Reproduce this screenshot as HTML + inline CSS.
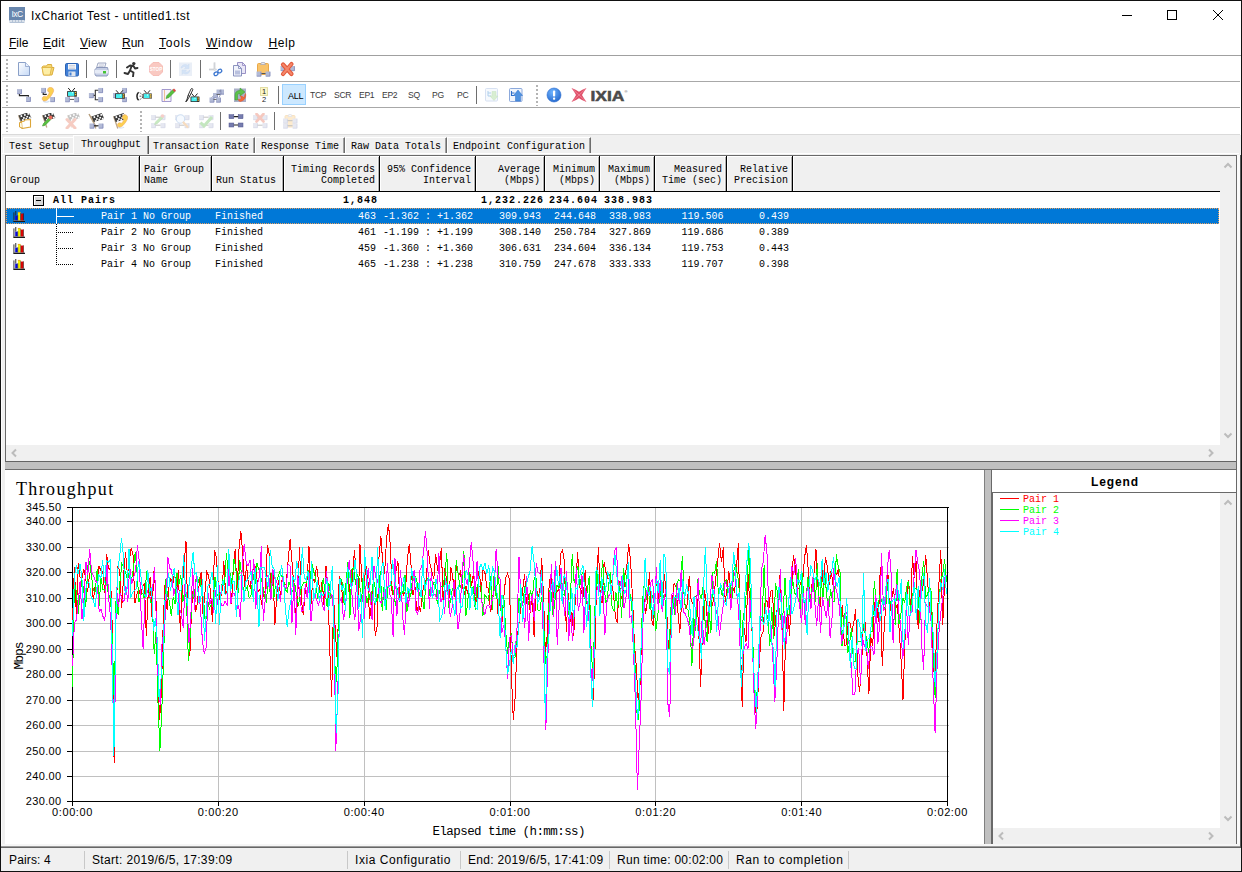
<!DOCTYPE html>
<html lang="en"><head><meta charset="utf-8"><title>IxChariot Test - untitled1.tst</title>
<style>
*{box-sizing:border-box;margin:0;padding:0}
html,body{width:1242px;height:872px;overflow:hidden;background:#f0f0f0}
body{position:relative;font-family:"Liberation Sans",sans-serif;font-size:12px;color:#000}
.a{position:absolute}
.m{font-family:"Liberation Mono",monospace;font-size:10px;line-height:12px;white-space:pre;letter-spacing:0;padding-top:1px}
.bd{font-weight:bold;letter-spacing:1px}
.ui{font-family:"Liberation Sans",sans-serif;font-size:12px;white-space:pre}
.r{text-align:right}
i.p{font-style:normal;display:inline-block;width:12px;text-align:left}
u{text-decoration:underline;text-underline-offset:1px}
.row{position:absolute;left:6px;width:1213px;height:16px}
.c{position:absolute;top:2px;height:12px}
.sel .c{color:#fff}
.hd{position:absolute;top:156px;height:35px;border-right:1px solid #000;border-left:1px solid #fff;border-top:1px solid #fff}
.hd span{position:absolute;left:0;right:3px;bottom:5px}
.sep{position:absolute;width:1px;height:18px;background:#6e6e6e}
.grip{position:absolute;width:2px;height:21px;background-image:linear-gradient(#b4b4b4 2px,transparent 2px);background-size:2px 4px}
.tb{position:absolute;font-family:"Liberation Sans",sans-serif;font-size:10px;color:#3a3a3a;top:89px;line-height:12px}
.st{position:absolute;top:852px;font-size:12px;line-height:16px;white-space:pre;letter-spacing:.36px}
.ss{position:absolute;top:851px;width:1px;height:18px;background:#c8c8c8}
</style></head>
<body>
<div class="a" style="left:0;top:0;width:1242px;height:55px;background:#fff"></div>
<svg class="a" style="left:9px;top:7px" width="16" height="16" viewBox="0 0 16 16"><rect width="16" height="16" fill="#6886ad"/><text x="8" y="9.5" font-family="Liberation Sans,sans-serif" font-size="8.500" fill="#fff" text-anchor="middle" letter-spacing="-0.5">IxC</text><path d="M0 14h16v2h-16zM2 13v2M5 13v2M8 13v2M11 13v2M14 13v2" stroke="#fff" stroke-width="1" fill="#6886ad"/></svg>
<div class="a ui" style="left:31px;top:8px;line-height:16px;letter-spacing:.46px">IxChariot Test - untitled1.tst</div>
<svg class="a" style="left:1110px;top:1px" width="130" height="30" viewBox="0 0 130 30" shape-rendering="crispEdges"><path d="M12 14.5h10" stroke="#000" fill="none"/><rect x="57.5" y="9.5" width="9" height="9" stroke="#000" fill="none"/><path d="M103 9l10 10M113 9l-10 10" stroke="#000" fill="none" shape-rendering="auto"/></svg>
<div class="a ui" style="left:9px;top:35px;line-height:16px;letter-spacing:0px"><u>F</u>ile</div>
<div class="a ui" style="left:43px;top:35px;line-height:16px;letter-spacing:0.3px"><u>E</u>dit</div>
<div class="a ui" style="left:80px;top:35px;line-height:16px;letter-spacing:0.25px"><u>V</u>iew</div>
<div class="a ui" style="left:122px;top:35px;line-height:16px;letter-spacing:0px"><u>R</u>un</div>
<div class="a ui" style="left:159px;top:35px;line-height:16px;letter-spacing:0.8px"><u>T</u>ools</div>
<div class="a ui" style="left:206px;top:35px;line-height:16px;letter-spacing:0.7px"><u>W</u>indow</div>
<div class="a ui" style="left:268.5px;top:35px;line-height:16px;letter-spacing:0.6px"><u>H</u>elp</div>
<div class="a" style="left:0;top:55px;width:1242px;height:1px;background:#a0a0a0"></div>
<div class="a" style="left:0;top:56px;width:1242px;height:79px;background:#fff"></div>
<div class="a" style="left:2px;top:81px;width:1238px;height:1px;background:#a8a8a8"></div>
<div class="a" style="left:2px;top:107px;width:1238px;height:1px;background:#a8a8a8"></div>
<div class="a" style="left:2px;top:134px;width:1238px;height:1px;background:#dadada"></div>
<div class="a" style="left:1px;top:135px;width:1px;height:712px;background:#fcfcfc"></div>
<div class="grip" style="left:6px;top:59px"></div>
<div class="grip" style="left:6px;top:85px"></div>
<div class="grip" style="left:6px;top:111px"></div>
<div class="grip" style="left:536px;top:85px"></div>
<div class="grip" style="left:140px;top:111px"></div>
<svg class="a" style="left:16px;top:61px" width="16" height="16" viewBox="0 0 16 16"><defs><linearGradient id="gn" x1="0" y1="0" x2="1" y2="1"><stop offset="0" stop-color="#fff"/><stop offset="1" stop-color="#c5d9f6"/></linearGradient></defs><path d="M2.5 1.5h7l4 4v9h-11z" fill="url(#gn)" stroke="#8aa0c8" stroke-width="1"/><path d="M9.5 1.5v4h4" fill="#e8f0ff" stroke="#8aa0c8" stroke-width=".8"/></svg>
<svg class="a" style="left:40px;top:61px" width="16" height="16" viewBox="0 0 16 16"><path d="M2 6l1.5 8h8.5l2-7.5h-2l-.5-3h-4l-1 1.5h-3z" fill="#f6d873" stroke="#dcae3c" stroke-width="1"/><path d="M2 6.5h9.5l-1.5 7.5h-6.500z" fill="#fdeea6" stroke="#dcae3c" stroke-width=".8"/></svg>
<svg class="a" style="left:64px;top:61px" width="16" height="16" viewBox="0 0 16 16"><rect x="1.500" y="2.500" width="13" height="12.500" rx="1.200" fill="#3f7fd6" stroke="#2d63b4"/><rect x="4" y="3" width="8" height="5.500" fill="#f4f6fa"/><path d="M5 4.500h6M5 6h6M5 7.500h6" stroke="#b8c0cc" stroke-width=".6"/><rect x="4.500" y="10.500" width="7" height="4.500" fill="#dfe5ee"/><rect x="5.500" y="11.500" width="2" height="3" fill="#3f7fd6"/></svg>
<div class="sep" style="left:86px;top:60px"></div>
<svg class="a" style="left:93px;top:61px" width="16" height="16" viewBox="0 0 16 16"><path d="M5 2h8l-1.500 5h-8z" fill="#f4f6fb" stroke="#8a96b4" stroke-width=".8"/><path d="M6 4h5M5.500 5.500h5" stroke="#a8b0c4" stroke-width=".6"/><path d="M2 8.500l2-2h10.500l.5 2v5l-1 1.500h-11l-1-1.500z" fill="#c5cee4" stroke="#7a88b0" stroke-width=".8"/><path d="M2 9h13v3.500h-13z" fill="#e6ebf6"/><rect x="10" y="10" width="3" height="2.500" fill="#45c436"/></svg>
<div class="sep" style="left:116px;top:60px"></div>
<svg class="a" style="left:123px;top:61px" width="16" height="16" viewBox="0 0 16 16"><circle cx="10.800" cy="2.600" r="1.700" fill="#333"/><path d="M4 6.500l3-2l3.500.5l1.500 2.500l2.500-.5M8.500 5.500l-1.500 4l3.500 2l-.5 4M7 9.500l-2 3.500l-3.500-1" stroke="#333" stroke-width="1.900" fill="none" stroke-linecap="round" stroke-linejoin="round"/></svg>
<svg class="a" style="left:148px;top:61px" width="16" height="16" viewBox="0 0 16 16"><path d="M5 1.500h6l3.500 3.500v6l-3.500 3.500h-6l-3.500-3.500v-6z" fill="#f9c9c2" stroke="#f4b4ac" stroke-width=".8"/><text x="8" y="9.800" font-family="Liberation Sans,sans-serif" font-weight="bold" font-size="4.600" text-anchor="middle" fill="#fff">STOP</text></svg>
<div class="sep" style="left:170px;top:60px"></div>
<svg class="a" style="left:177px;top:61px" width="16" height="16" viewBox="0 0 16 16" opacity="0.6"><rect x="2" y="1.500" width="13" height="13.500" fill="#dde6f2"/><path d="M4 7c.5-3 4-4.500 7-2.500l1-1.500v4.500h-4.500l1.500-1.500c-1.500-1-3.500-.5-4 1zM13 9.500c-.5 3-4 4.500-7 2.500l-1 1.500v-4.500h4.500l-1.500 1.500c1.500 1 3.500.5 4-1z" fill="#b9d2f2" stroke="#a8c4ea" stroke-width=".5"/></svg>
<div class="sep" style="left:200px;top:60px"></div>
<svg class="a" style="left:207px;top:61px" width="16" height="16" viewBox="0 0 16 16"><path d="M7.500 1.500v8M2 8.500h7.500" stroke="#b8bcc4" stroke-width="1.600" fill="none"/><path d="M7.800 1.500v7.500M2 8.800h7" stroke="#f2f2f2" stroke-width=".6" fill="none"/><ellipse cx="9" cy="12.800" rx="2" ry="1.700" fill="none" stroke="#3b76d0" stroke-width="1.300" transform="rotate(-30 9 12.800)"/><ellipse cx="12.800" cy="10" rx="2" ry="1.700" fill="none" stroke="#3b76d0" stroke-width="1.300" transform="rotate(-30 12.800 10)"/></svg>
<svg class="a" style="left:231px;top:61px" width="16" height="16" viewBox="0 0 16 16"><path d="M6.500 1.500h5l3 3v8h-8z" fill="#e9e6f6" stroke="#8f86c0" stroke-width=".9"/><path d="M11.500 1.500v3h3" fill="none" stroke="#8f86c0" stroke-width=".8"/><path d="M2.500 4.500h5l3 3v7.500h-8z" fill="#f1f3fb" stroke="#7f88b8" stroke-width=".9"/><path d="M7.500 4.500v3h3" fill="none" stroke="#7f88b8" stroke-width=".8"/><rect x="4" y="9.500" width="5" height="4" fill="#b9c0de"/></svg>
<svg class="a" style="left:255px;top:61px" width="16" height="16" viewBox="0 0 16 16"><rect x="2.500" y="2.500" width="11" height="11" rx="1" fill="#f9c36a" stroke="#e6a23c" stroke-width=".9"/><path d="M5.500 3.500l1-2h3l1 2z" fill="#e8e8ee" stroke="#a0a4b4" stroke-width=".7"/><path d="M4 12.500h9" stroke="#555" stroke-width="1"/><rect x="1.5" y="10.5" width="4.8" height="4.8" fill="#b2bad6"/><path d="M5.8999999999999995 10.8v4.3999999999999995h-4.1" stroke="#8189b9" stroke-width=".8" fill="none"/><rect x="10.5" y="10.5" width="4.8" height="4.8" fill="#b2bad6"/><path d="M14.9 10.8v4.3999999999999995h-4.1" stroke="#8189b9" stroke-width=".8" fill="none"/></svg>
<svg class="a" style="left:279px;top:61px" width="16" height="16" viewBox="0 0 16 16"><rect x="1.5" y="5" width="4.8" height="4.8" fill="#b2bad6"/><path d="M5.8999999999999995 5.3v4.3999999999999995h-4.1" stroke="#8189b9" stroke-width=".8" fill="none"/><rect x="11" y="5" width="4.8" height="4.8" fill="#b2bad6"/><path d="M15.4 5.3v4.3999999999999995h-4.1" stroke="#8189b9" stroke-width=".8" fill="none"/><path d="M4 3.500l8.500 9.500M12.500 3l-8.500 10" stroke="#e2583a" stroke-width="4.200" stroke-linecap="round"/><path d="M4 3.500l8.500 9.500M12.500 3l-8.500 10" stroke="#f4866a" stroke-width="2" stroke-linecap="round"/></svg>
<svg class="a" style="left:16px;top:87px" width="16" height="16" viewBox="0 0 16 16"><rect x="1" y="2.1" width="4.8" height="4.8" fill="#b2bad6"/><path d="M5.3999999999999995 2.4v4.3999999999999995h-4.1" stroke="#8189b9" stroke-width=".8" fill="none"/><rect x="10" y="9.8" width="4.8" height="4.8" fill="#b2bad6"/><path d="M14.4 10.100000000000001v4.3999999999999995h-4.1" stroke="#8189b9" stroke-width=".8" fill="none"/><path d="M3.400 6.900v1.700h9v1.200" stroke="#222" stroke-width="1.100" fill="none"/></svg>
<svg class="a" style="left:40px;top:87px" width="16" height="16" viewBox="0 0 16 16"><rect x="1" y="0.9" width="4.8" height="4.8" fill="#b2bad6"/><path d="M5.3999999999999995 1.2v4.3999999999999995h-4.1" stroke="#8189b9" stroke-width=".8" fill="none"/><path d="M3.200 5.700v1.700h3.600" stroke="#222" stroke-width="1.100" fill="none"/><rect x="10.1" y="10" width="4.8" height="4.8" fill="#b2bad6"/><path d="M14.499999999999998 10.3v4.3999999999999995h-4.1" stroke="#8189b9" stroke-width=".8" fill="none"/><path d="M3 14.200c2.500 1.300 5.500.5 6.500-.2" stroke="#cfe0f4" stroke-width="1.200" fill="none"/><path d="M9.300.4c1.600-.5 3.300.2 4.100 1.800c.5 1.200.2 2.500-.5 3.600c-.9 1.800-2 3.600-3.600 5.300c-1.300 1.500-2.600 2.600-4.300 2.900c-1.400.2-2.600-.6-2.800-2c-.1-1.200.5-2.300 1.700-2.700c.9-.3 1.800-.2 2.500.5c1.200-.9 2.300-2.500 2.900-4.300c-.9-.3-1.500-1-1.700-1.900c-.2-1.300.5-2.700 1.700-3.200z" fill="#fbd050" stroke="#f2a868" stroke-width=".6"/></svg>
<svg class="a" style="left:64px;top:87px" width="16" height="16" viewBox="0 0 16 16"><path d="M4.2 1l2.700 3.200M10.9 1l-2.700 3.200" stroke="#222" stroke-width="1" fill="none"/><rect x="3.1" y="4" width="9.8" height="5.7" rx=".4" fill="#333"/><rect x="4.0" y="4.8" width="6.300000000000001" height="4.1" fill="#45f0f0"/><rect x="7.9" y="5.2" width="1" height="1" fill="#fff"/><rect x="10.9" y="4.9" width="1.300" height="1.300" fill="#f8c830"/><rect x="10.9" y="7" width="1.300" height="1.300" fill="#f8c830"/><rect x="5.800" y="9.700" width="4.400" height="2.400" fill="#fff"/><path d="M5.800 12.400h4.400" stroke="#555" stroke-width="1"/><rect x="1" y="10.1" width="4.8" height="4.8" fill="#b2bad6"/><path d="M5.3999999999999995 10.4v4.3999999999999995h-4.1" stroke="#8189b9" stroke-width=".8" fill="none"/><rect x="10.2" y="10.1" width="4.8" height="4.8" fill="#b2bad6"/><path d="M14.6 10.4v4.3999999999999995h-4.1" stroke="#8189b9" stroke-width=".8" fill="none"/></svg>
<svg class="a" style="left:88px;top:87px" width="16" height="16" viewBox="0 0 16 16"><rect x="0.9" y="6" width="4.8" height="4.8" fill="#b2bad6"/><path d="M5.3 6.3v4.3999999999999995h-4.1" stroke="#8189b9" stroke-width=".8" fill="none"/><rect x="10.2" y="0.95" width="4.8" height="4.8" fill="#b2bad6"/><path d="M14.6 1.25v4.3999999999999995h-4.1" stroke="#8189b9" stroke-width=".8" fill="none"/><rect x="10.2" y="10" width="4.8" height="4.8" fill="#b2bad6"/><path d="M14.6 10.3v4.3999999999999995h-4.1" stroke="#8189b9" stroke-width=".8" fill="none"/><path d="M5.700 8.400h1.600M10.200 3.200h-2.900v9.500h2.900" stroke="#333" stroke-width="1.100" fill="none"/></svg>
<svg class="a" style="left:112px;top:87px" width="16" height="16" viewBox="0 0 16 16"><rect x="10" y="0.95" width="4.8" height="4.8" fill="#b2bad6"/><path d="M14.4 1.25v4.3999999999999995h-4.1" stroke="#8189b9" stroke-width=".8" fill="none"/><rect x="1" y="6" width="4.8" height="4.8" fill="#b2bad6"/><path d="M5.3999999999999995 6.3v4.3999999999999995h-4.1" stroke="#8189b9" stroke-width=".8" fill="none"/><rect x="10" y="10" width="4.8" height="4.8" fill="#b2bad6"/><path d="M14.4 10.3v4.3999999999999995h-4.1" stroke="#8189b9" stroke-width=".8" fill="none"/><path d="M4.1 3.3l2.700 3.200M10.9 3.3l-2.700 3.200" stroke="#222" stroke-width="1" fill="none"/><rect x="3" y="6.3" width="9.9" height="5.5" rx=".4" fill="#333"/><rect x="3.9" y="7.1" width="6.4" height="3.9" fill="#45f0f0"/><rect x="7.9" y="7.5" width="1" height="1" fill="#fff"/><rect x="10.9" y="7.2" width="1.300" height="1.300" fill="#f8c830"/><rect x="10.9" y="9.3" width="1.300" height="1.300" fill="#f8c830"/></svg>
<svg class="a" style="left:136px;top:87px" width="16" height="16" viewBox="0 0 16 16"><path d="M2.600 5.200c-2.200 2.200-2.200 5.800 0 8" stroke="#222" stroke-width="1.500" fill="none"/><path d="M7 8.200l-3.600-2.800M7 9.200h-4M7 10.200l-3.600 2.800" stroke="#333" stroke-width=".9" stroke-dasharray="1.300 .8" fill="none"/><path d="M8.2 3.3l2.700 3.200M14.0 3.3l-2.700 3.200" stroke="#222" stroke-width="1" fill="none"/><rect x="7.1" y="6.3" width="8.9" height="5.5" rx=".4" fill="#666"/><rect x="8.0" y="7.1" width="5.4" height="3.9" fill="#45f0f0"/><rect x="11.0" y="7.5" width="1" height="1" fill="#fff"/><rect x="14.0" y="7.2" width="1.300" height="1.300" fill="#f8c830"/><rect x="14.0" y="9.3" width="1.300" height="1.300" fill="#f8c830"/></svg>
<svg class="a" style="left:160px;top:87px" width="16" height="16" viewBox="0 0 16 16"><path d="M2 2.500h9v12h-9z" fill="#f6f4fb" stroke="#9a8fc8" stroke-width=".9"/><path d="M4.500 3v11" stroke="#f0b080" stroke-width=".8"/><path d="M6 11.500l1-3l6-6l2 2l-6 6z" fill="#58c040" stroke="#3c9a2c" stroke-width=".6"/><path d="M12.500 3l1.500-1.500l2 2l-1.500 1.500z" fill="#e04848"/></svg>
<svg class="a" style="left:184px;top:87px" width="16" height="16" viewBox="0 0 16 16"><path d="M2.500 14.500l1.500-6l3-6.500c.8-1 2-.5 1.800.8l-3.300 6.700zM4 8.500l2 1" stroke="#222" stroke-width=".9" fill="#fff"/><path d="M1.500 15l1.500-2.500" stroke="#222" stroke-width=".9"/><path d="M7.6 6.5l2.700 3.200M13.5 6.5l-2.700 3.200" stroke="#222" stroke-width="1" fill="none"/><rect x="6.5" y="9.5" width="9" height="5.5" rx=".4" fill="#333"/><rect x="7.4" y="10.3" width="5.5" height="3.9" fill="#45f0f0"/><rect x="10.5" y="10.7" width="1" height="1" fill="#fff"/><rect x="13.5" y="10.4" width="1.300" height="1.300" fill="#f8c830"/><rect x="13.5" y="12.5" width="1.300" height="1.300" fill="#f8c830"/></svg>
<svg class="a" style="left:208px;top:87px" width="16" height="16" viewBox="0 0 16 16"><rect x="1.5" y="10.5" width="4.8" height="4.8" fill="#b2bad6"/><path d="M5.8999999999999995 10.8v4.3999999999999995h-4.1" stroke="#8189b9" stroke-width=".8" fill="none"/><rect x="5" y="6" width="4.8" height="4.8" fill="#b2bad6"/><path d="M9.4 6.3v4.3999999999999995h-4.1" stroke="#8189b9" stroke-width=".8" fill="none"/><rect x="8" y="10.5" width="4.8" height="4.8" fill="#b2bad6"/><path d="M12.4 10.8v4.3999999999999995h-4.1" stroke="#8189b9" stroke-width=".8" fill="none"/><rect x="12" y="2.5" width="4.8" height="4.8" fill="#b2bad6"/><path d="M16.400000000000002 2.8v4.3999999999999995h-4.1" stroke="#8189b9" stroke-width=".8" fill="none"/><rect x="8.5" y="2.5" width="4.8" height="4.8" fill="#b2bad6"/><path d="M12.9 2.8v4.3999999999999995h-4.1" stroke="#8189b9" stroke-width=".8" fill="none"/><path d="M5.500 12.500h3M8.500 7.500h3.500M11.500 4h1" stroke="#555" stroke-width=".8"/><path d="M3.500 10.500l2-1.500M11 10.500l2-4" stroke="#8890b4" stroke-width=".8"/></svg>
<svg class="a" style="left:232px;top:87px" width="16" height="16" viewBox="0 0 16 16"><rect x="2" y="1.500" width="12" height="13.500" fill="#aab0c8"/><path d="M3 13v-5c0-3 2-4.500 5-4.500v-2.500l5 4l-5 4v-2.500c-1.500 0-2.500.5-2.500 2v4.500z" fill="#5cc24a" stroke="#3a9a30" stroke-width=".5"/><path d="M13.500 6.500c1 3-.5 7-5 8c-1.500 0-2.500-1-2-2.500c.8.800 2 .5 2.500-.5c.3-1-.2-2-.8-2.500c2 0 3 .5 3.500 2c.8-1.500.8-3 1.800-4.500z" fill="#f06a3a" stroke="#e04820" stroke-width=".4"/></svg>
<svg class="a" style="left:256px;top:87px" width="16" height="16" viewBox="0 0 16 16"><rect x="4.500" y=".5" width="7" height="8" fill="#fbf6c8" stroke="#b8b040" stroke-width=".8" stroke-dasharray="1 1"/><text x="8" y="7.400" font-family="Liberation Sans,sans-serif" font-size="7.500" text-anchor="middle" fill="#222">1</text><text x="8" y="15.200" font-family="Liberation Sans,sans-serif" font-size="7.500" text-anchor="middle" fill="#222">2</text></svg>
<div class="sep" style="left:278px;top:86px"></div>
<div class="a" style="left:282px;top:84px;width:24px;height:21px;background:#cce8ff;border:1px solid #99d1ff"></div>
<div class="tb" style="left:288px;top:90px;color:#000;font-size:9px;letter-spacing:-.2px">ALL</div>
<div class="tb" style="left:310px;font-size:8.600px;letter-spacing:-.3px">TCP</div>
<div class="tb" style="left:334px;font-size:8.600px;letter-spacing:-.3px">SCR</div>
<div class="tb" style="left:359px;font-size:8.600px;letter-spacing:-.3px">EP1</div>
<div class="tb" style="left:382px;font-size:8.600px;letter-spacing:-.3px">EP2</div>
<div class="tb" style="left:408px;font-size:8.600px;letter-spacing:-.3px">SQ</div>
<div class="tb" style="left:432px;font-size:8.600px;letter-spacing:-.3px">PG</div>
<div class="tb" style="left:457px;font-size:8.600px;letter-spacing:-.3px">PC</div>
<div class="sep" style="left:476px;top:86px"></div>
<svg class="a" style="left:484px;top:87px" width="16" height="16" viewBox="0 0 16 16" opacity="0.8"><rect x="1.500" y="1.500" width="12" height="12.500" rx="1" fill="#f4f8fd" stroke="#c8d6ee" stroke-width=".9"/><path d="M4 4v5h3M4 6h3" stroke="#9cc4e8" stroke-width="1" fill="none"/><path d="M8 4.500h4v4.500h2l-4 4.500l-4-4.500h2z" fill="#cfeac8" stroke="#b8dcb0" stroke-width=".5"/></svg>
<svg class="a" style="left:508px;top:87px" width="16" height="16" viewBox="0 0 16 16"><rect x="1.500" y="1.500" width="12.500" height="13" rx="1" fill="#f0f5fc" stroke="#7f9fd8" stroke-width=".9"/><path d="M3.500 4v4.500h3M3.500 6h3" stroke="#2d6fc8" stroke-width="1.100" fill="none"/><path d="M7.500 14v-5.500h-2l4.500-5.500l4.500 5.500h-2v5.500z" fill="#4f93e0" stroke="#2d6fc8" stroke-width=".5"/></svg>
<svg class="a" style="left:546px;top:87px" width="16" height="16" viewBox="0 0 16 16"><defs><radialGradient id="gi" cx=".4" cy=".3" r=".8"><stop offset="0" stop-color="#6fb4ff"/><stop offset="1" stop-color="#1e62c8"/></radialGradient></defs><circle cx="8" cy="8" r="7" fill="url(#gi)" stroke="#2a6cd0" stroke-width=".6"/><rect x="7" y="3.500" width="2.200" height="6" rx=".8" fill="#fff"/><rect x="7" y="10.600" width="2.200" height="2.200" rx=".8" fill="#fff"/></svg>
<svg class="a" style="left:570px;top:86px" width="60" height="18" viewBox="0 0 60 18"><path d="M1.500 2Q6 3.600 9 5.800Q12 3.600 16.500 2Q13.600 6 12 9Q13.600 12 16.500 16Q12 14.400 9 12.200Q6 14.400 1.500 16Q4.400 12 6 9Q4.400 6 1.500 2Z" fill="#e0506a"/><path d="M3 3.500L15 14.500M15 3.500L3 14.500" stroke="#f08a9c" stroke-width=".8"/><text x="20.500" y="14.600" font-family="Liberation Sans,sans-serif" font-weight="bold" font-size="15" fill="#4b4b4b" textLength="34" lengthAdjust="spacingAndGlyphs" stroke="#4b4b4b" stroke-width=".5">IXIA</text><text x="54.500" y="7" font-family="Liberation Sans,sans-serif" font-size="4" fill="#4b4b4b">®</text></svg>
<svg class="a" style="left:16px;top:113px" width="16" height="16" viewBox="0 0 16 16"><path d="M2.6 2.2l4.200 12.300" stroke="#bda687" stroke-width="1.300"/><path d="M2.6 2.4l10-3.300l2.800 5.800l-10.600 3z" fill="#3a3a3a"/><rect x="4.3" y="2.6" width="1.700" height="1.700" fill="#fff" transform="rotate(-18 4.3 2.6)"/><rect x="7.8" y="1.4" width="1.700" height="1.700" fill="#fff" transform="rotate(-18 7.8 1.4)"/><rect x="11.2" y="0.3" width="1.700" height="1.700" fill="#fff" transform="rotate(-18 11.2 0.3)"/><rect x="6.8" y="4.4" width="1.700" height="1.700" fill="#fff" transform="rotate(-18 6.8 4.4)"/><rect x="10.2" y="3.2" width="1.700" height="1.700" fill="#fff" transform="rotate(-18 10.2 3.2)"/><rect x="5.8" y="6.4" width="1.700" height="1.700" fill="#fff" transform="rotate(-18 5.8 6.4)"/><rect x="9.2" y="5.3" width="1.700" height="1.700" fill="#fff" transform="rotate(-18 9.2 5.3)"/><rect x="12.8" y="4.1" width="1.700" height="1.700" fill="#fff" transform="rotate(-18 12.8 4.1)"/><path d="M5.500 8.500l2.500-.3l1-1.200l5.500-.5v7.500l-8.500 1.500z" fill="#fff" stroke="#dca63a" stroke-width="1.100"/><path d="M5.500 9.500h-2v4.500l2.500 1" fill="#fff8e0" stroke="#dca63a" stroke-width="1"/></svg>
<svg class="a" style="left:40px;top:113px" width="16" height="16" viewBox="0 0 16 16"><path d="M2.6 2.2l4.200 12.300" stroke="#bda687" stroke-width="1.300"/><path d="M2.6 2.4l10-3.300l2.800 5.800l-10.600 3z" fill="#3a3a3a"/><rect x="4.3" y="2.6" width="1.700" height="1.700" fill="#fff" transform="rotate(-18 4.3 2.6)"/><rect x="7.8" y="1.4" width="1.700" height="1.700" fill="#fff" transform="rotate(-18 7.8 1.4)"/><rect x="11.2" y="0.3" width="1.700" height="1.700" fill="#fff" transform="rotate(-18 11.2 0.3)"/><rect x="6.8" y="4.4" width="1.700" height="1.700" fill="#fff" transform="rotate(-18 6.8 4.4)"/><rect x="10.2" y="3.2" width="1.700" height="1.700" fill="#fff" transform="rotate(-18 10.2 3.2)"/><rect x="5.8" y="6.4" width="1.700" height="1.700" fill="#fff" transform="rotate(-18 5.8 6.4)"/><rect x="9.2" y="5.3" width="1.700" height="1.700" fill="#fff" transform="rotate(-18 9.2 5.3)"/><rect x="12.8" y="4.1" width="1.700" height="1.700" fill="#fff" transform="rotate(-18 12.8 4.1)"/><path d="M2.500 13l1-2.500l5.500-5.500l1.700 1.700l-5.500 5.500z" fill="#58c040" stroke="#3c9a2c" stroke-width=".6"/><circle cx="10.500" cy="4.500" r="2" fill="#e46a5a"/></svg>
<svg class="a" style="left:64px;top:113px" width="16" height="16" viewBox="0 0 16 16" opacity="0.3"><path d="M3.6 2.2l4.200 12.300" stroke="#bda687" stroke-width="1.300"/><path d="M3.6 2.4l10-3.300l2.800 5.800l-10.600 3z" fill="#3a3a3a"/><rect x="5.3" y="2.6" width="1.700" height="1.700" fill="#fff" transform="rotate(-18 5.3 2.6)"/><rect x="8.8" y="1.4" width="1.700" height="1.700" fill="#fff" transform="rotate(-18 8.8 1.4)"/><rect x="12.2" y="0.3" width="1.700" height="1.700" fill="#fff" transform="rotate(-18 12.2 0.3)"/><rect x="7.8" y="4.4" width="1.700" height="1.700" fill="#fff" transform="rotate(-18 7.8 4.4)"/><rect x="11.2" y="3.2" width="1.700" height="1.700" fill="#fff" transform="rotate(-18 11.2 3.2)"/><rect x="6.8" y="6.4" width="1.700" height="1.700" fill="#fff" transform="rotate(-18 6.8 6.4)"/><rect x="10.2" y="5.3" width="1.700" height="1.700" fill="#fff" transform="rotate(-18 10.2 5.3)"/><rect x="13.8" y="4.1" width="1.700" height="1.700" fill="#fff" transform="rotate(-18 13.8 4.1)"/><path d="M3 6.500l8 8.500M11 6.500l-8 8.500" stroke="#e2583a" stroke-width="3" stroke-linecap="round"/></svg>
<svg class="a" style="left:88px;top:113px" width="16" height="16" viewBox="0 0 16 16"><path d="M1 1l7 13" stroke="#b49a78" stroke-width="1.400"/><path d="M3.6 3.2l4.200 12.300" stroke="#bda687" stroke-width="1.300"/><path d="M3.6 3.4l10-3.300l2.800 5.800l-10.600 3z" fill="#3a3a3a"/><rect x="5.3" y="3.6" width="1.700" height="1.700" fill="#fff" transform="rotate(-18 5.3 3.6)"/><rect x="8.8" y="2.4" width="1.700" height="1.700" fill="#fff" transform="rotate(-18 8.8 2.4)"/><rect x="12.2" y="1.3" width="1.700" height="1.700" fill="#fff" transform="rotate(-18 12.2 1.3)"/><rect x="7.8" y="5.4" width="1.700" height="1.700" fill="#fff" transform="rotate(-18 7.8 5.4)"/><rect x="11.2" y="4.2" width="1.700" height="1.700" fill="#fff" transform="rotate(-18 11.2 4.2)"/><rect x="6.8" y="7.4" width="1.700" height="1.700" fill="#fff" transform="rotate(-18 6.8 7.4)"/><rect x="10.2" y="6.3" width="1.700" height="1.700" fill="#fff" transform="rotate(-18 10.2 6.3)"/><rect x="13.8" y="5.1" width="1.700" height="1.700" fill="#fff" transform="rotate(-18 13.8 5.1)"/><rect x="1.5" y="10.5" width="4.8" height="4.8" fill="#b2bad6"/><path d="M5.8999999999999995 10.8v4.3999999999999995h-4.1" stroke="#8189b9" stroke-width=".8" fill="none"/><rect x="10.5" y="10.5" width="4.8" height="4.8" fill="#b2bad6"/><path d="M14.9 10.8v4.3999999999999995h-4.1" stroke="#8189b9" stroke-width=".8" fill="none"/><path d="M6 12.800h4.500" stroke="#222" stroke-width="1.200"/></svg>
<svg class="a" style="left:112px;top:113px" width="16" height="16" viewBox="0 0 16 16"><path d="M1.6 3.2l4.200 12.300" stroke="#bda687" stroke-width="1.300"/><path d="M1.6 3.4l10-3.300l2.800 5.800l-10.600 3z" fill="#3a3a3a"/><rect x="3.3" y="3.6" width="1.700" height="1.700" fill="#fff" transform="rotate(-18 3.3 3.6)"/><rect x="6.8" y="2.4" width="1.700" height="1.700" fill="#fff" transform="rotate(-18 6.8 2.4)"/><rect x="10.2" y="1.3" width="1.700" height="1.700" fill="#fff" transform="rotate(-18 10.2 1.3)"/><rect x="5.8" y="5.4" width="1.700" height="1.700" fill="#fff" transform="rotate(-18 5.8 5.4)"/><rect x="9.2" y="4.2" width="1.700" height="1.700" fill="#fff" transform="rotate(-18 9.2 4.2)"/><rect x="4.8" y="7.4" width="1.700" height="1.700" fill="#fff" transform="rotate(-18 4.8 7.4)"/><rect x="8.2" y="6.3" width="1.700" height="1.700" fill="#fff" transform="rotate(-18 8.2 6.3)"/><rect x="11.8" y="5.1" width="1.700" height="1.700" fill="#fff" transform="rotate(-18 11.8 5.1)"/><g transform="translate(3.500 1.500) scale(.9)"><path d="M3 14.200c2.500 1.300 5.500.5 6.500-.2" stroke="#cfe0f4" stroke-width="1.200" fill="none"/><path d="M9.300.4c1.600-.5 3.300.2 4.100 1.800c.5 1.200.2 2.500-.5 3.600c-.9 1.800-2 3.600-3.600 5.300c-1.300 1.500-2.600 2.600-4.300 2.900c-1.400.2-2.600-.6-2.800-2c-.1-1.200.5-2.300 1.700-2.700c.9-.3 1.800-.2 2.500.5c1.200-.9 2.300-2.500 2.900-4.300c-.9-.3-1.500-1-1.700-1.900c-.2-1.300.5-2.700 1.700-3.200z" fill="#fbd050" stroke="#f2a868" stroke-width=".6"/></g></svg>
<svg class="a" style="left:150px;top:113px" width="16" height="16" viewBox="0 0 16 16" opacity="0.32"><rect x="1" y="2" width="4.8" height="4.8" fill="#b2bad6"/><path d="M5.3999999999999995 2.3v4.3999999999999995h-4.1" stroke="#8189b9" stroke-width=".8" fill="none"/><rect x="10.5" y="2" width="4.8" height="4.8" fill="#b2bad6"/><path d="M14.9 2.3v4.3999999999999995h-4.1" stroke="#8189b9" stroke-width=".8" fill="none"/><rect x="1" y="10" width="4.8" height="4.8" fill="#b2bad6"/><path d="M5.3999999999999995 10.3v4.3999999999999995h-4.1" stroke="#8189b9" stroke-width=".8" fill="none"/><rect x="10.5" y="10" width="4.8" height="4.8" fill="#b2bad6"/><path d="M14.9 10.3v4.3999999999999995h-4.1" stroke="#8189b9" stroke-width=".8" fill="none"/><path d="M5.500 4.200h5M5.500 12.200h5" stroke="#444" stroke-width="1"/><path d="M4.500 11.500l1-2.500l6-6l1.700 1.700l-6 6z" fill="#58c040" stroke="#3c9a2c" stroke-width=".6"/><circle cx="12.500" cy="3" r="1.800" fill="#e46a5a"/></svg>
<svg class="a" style="left:174px;top:113px" width="16" height="16" viewBox="0 0 16 16" opacity="0.32"><rect x="1" y="2" width="4.8" height="4.8" fill="#b2bad6"/><path d="M5.3999999999999995 2.3v4.3999999999999995h-4.1" stroke="#8189b9" stroke-width=".8" fill="none"/><rect x="10.5" y="2" width="4.8" height="4.8" fill="#b2bad6"/><path d="M14.9 2.3v4.3999999999999995h-4.1" stroke="#8189b9" stroke-width=".8" fill="none"/><rect x="1" y="10" width="4.8" height="4.8" fill="#b2bad6"/><path d="M5.3999999999999995 10.3v4.3999999999999995h-4.1" stroke="#8189b9" stroke-width=".8" fill="none"/><rect x="10.5" y="10" width="4.8" height="4.8" fill="#b2bad6"/><path d="M14.9 10.3v4.3999999999999995h-4.1" stroke="#8189b9" stroke-width=".8" fill="none"/><path d="M5.500 4.200h5M5.500 12.200h5" stroke="#444" stroke-width="1"/><circle cx="6.500" cy="6" r="4.200" fill="#e4f0ff" stroke="#6a9ad8" stroke-width="1.100"/><path d="M9.500 9.500l4 4.500" stroke="#e8963a" stroke-width="2.200" stroke-linecap="round"/></svg>
<svg class="a" style="left:198px;top:113px" width="16" height="16" viewBox="0 0 16 16" opacity="0.32"><rect x="1" y="2" width="4.8" height="4.8" fill="#b2bad6"/><path d="M5.3999999999999995 2.3v4.3999999999999995h-4.1" stroke="#8189b9" stroke-width=".8" fill="none"/><rect x="10.5" y="2" width="4.8" height="4.8" fill="#b2bad6"/><path d="M14.9 2.3v4.3999999999999995h-4.1" stroke="#8189b9" stroke-width=".8" fill="none"/><rect x="1" y="10" width="4.8" height="4.8" fill="#b2bad6"/><path d="M5.3999999999999995 10.3v4.3999999999999995h-4.1" stroke="#8189b9" stroke-width=".8" fill="none"/><rect x="10.5" y="10" width="4.8" height="4.8" fill="#b2bad6"/><path d="M14.9 10.3v4.3999999999999995h-4.1" stroke="#8189b9" stroke-width=".8" fill="none"/><path d="M5.500 4.200h5M5.500 12.200h5" stroke="#444" stroke-width="1"/><path d="M2.500 9.500l3.500 3.500l8-9" stroke="#4ab43a" stroke-width="3" fill="none"/></svg>
<div class="sep" style="left:220px;top:112px"></div>
<svg class="a" style="left:228px;top:113px" width="16" height="16" viewBox="0 0 16 16"><g><rect x="1" y="1.7" width="4.800" height="4" fill="#767cae" stroke="#50568e" stroke-width=".5"/><rect x="10.2" y="1.7" width="4.800" height="4" fill="#767cae" stroke="#50568e" stroke-width=".5"/><rect x="1" y="10" width="4.800" height="4" fill="#767cae" stroke="#50568e" stroke-width=".5"/><rect x="10.2" y="10" width="4.800" height="4" fill="#767cae" stroke="#50568e" stroke-width=".5"/><path d="M5.800 3.700h4.400M5.800 12h4.400" stroke="#222" stroke-width="1.200"/></g></svg>
<svg class="a" style="left:252px;top:113px" width="16" height="16" viewBox="0 0 16 16" opacity="0.32"><rect x="1" y="2" width="4.8" height="4.8" fill="#b2bad6"/><path d="M5.3999999999999995 2.3v4.3999999999999995h-4.1" stroke="#8189b9" stroke-width=".8" fill="none"/><rect x="10.5" y="2" width="4.8" height="4.8" fill="#b2bad6"/><path d="M14.9 2.3v4.3999999999999995h-4.1" stroke="#8189b9" stroke-width=".8" fill="none"/><rect x="1" y="10" width="4.8" height="4.8" fill="#b2bad6"/><path d="M5.3999999999999995 10.3v4.3999999999999995h-4.1" stroke="#8189b9" stroke-width=".8" fill="none"/><rect x="10.5" y="10" width="4.8" height="4.8" fill="#b2bad6"/><path d="M14.9 10.3v4.3999999999999995h-4.1" stroke="#8189b9" stroke-width=".8" fill="none"/><path d="M5.500 4.200h5M5.500 12.200h5" stroke="#444" stroke-width="1"/><path d="M4.500 1l7 7.500M11.500 1l-7 7.500" stroke="#e2583a" stroke-width="2.600" stroke-linecap="round"/></svg>
<div class="sep" style="left:274px;top:112px"></div>
<svg class="a" style="left:282px;top:113px" width="16" height="16" viewBox="0 0 16 16" opacity="0.32"><rect x="3" y="2.500" width="10" height="11.500" rx="1" fill="#f9c36a" stroke="#e6a23c" stroke-width=".9"/><path d="M6 3.500l.8-2h2.400l.8 2z" fill="#e8e8ee" stroke="#a0a4b4" stroke-width=".7"/><rect x="1" y="5.5" width="4.8" height="4.8" fill="#b2bad6"/><path d="M5.3999999999999995 5.8v4.3999999999999995h-4.1" stroke="#8189b9" stroke-width=".8" fill="none"/><rect x="10.5" y="5.5" width="4.8" height="4.8" fill="#b2bad6"/><path d="M14.9 5.8v4.3999999999999995h-4.1" stroke="#8189b9" stroke-width=".8" fill="none"/><rect x="1" y="10.5" width="4.8" height="4.8" fill="#b2bad6"/><path d="M5.3999999999999995 10.8v4.3999999999999995h-4.1" stroke="#8189b9" stroke-width=".8" fill="none"/><rect x="10.5" y="10.5" width="4.8" height="4.8" fill="#b2bad6"/><path d="M14.9 10.8v4.3999999999999995h-4.1" stroke="#8189b9" stroke-width=".8" fill="none"/><path d="M5.500 7.700h5M5.500 12.700h5" stroke="#444" stroke-width="1"/></svg>
<div class="a" style="left:3px;top:137px;width:72px;height:17px;border-top:1px solid #fff;border-left:1px solid #fff;border-right:1px solid #6d6d6d;box-shadow:inset -1px 0 0 #a0a0a0"></div>
<div class="a m" style="left:9px;top:140px">Test Setup</div>
<div class="a" style="left:147px;top:137px;width:108px;height:17px;border-top:1px solid #fff;border-left:1px solid #fff;border-right:1px solid #6d6d6d;box-shadow:inset -1px 0 0 #a0a0a0"></div>
<div class="a m" style="left:153px;top:140px">Transaction Rate</div>
<div class="a" style="left:255px;top:137px;width:90px;height:17px;border-top:1px solid #fff;border-left:1px solid #fff;border-right:1px solid #6d6d6d;box-shadow:inset -1px 0 0 #a0a0a0"></div>
<div class="a m" style="left:261px;top:140px">Response Time</div>
<div class="a" style="left:345px;top:137px;width:102px;height:17px;border-top:1px solid #fff;border-left:1px solid #fff;border-right:1px solid #6d6d6d;box-shadow:inset -1px 0 0 #a0a0a0"></div>
<div class="a m" style="left:351px;top:140px">Raw Data Totals</div>
<div class="a" style="left:447px;top:137px;width:144px;height:17px;border-top:1px solid #fff;border-left:1px solid #fff;border-right:1px solid #6d6d6d;box-shadow:inset -1px 0 0 #a0a0a0"></div>
<div class="a m" style="left:453px;top:140px">Endpoint Configuration</div>
<div class="a" style="left:2px;top:153px;width:1237px;height:1px;background:#fff"></div>
<div class="a" style="left:73px;top:135px;width:76px;height:19px;background:#f0f0f0;border-top:1px solid #fff;border-left:1px solid #fff"></div><div class="a" style="left:147px;top:136px;width:2px;height:18px;background:linear-gradient(90deg,#a0a0a0 1px,#555 1px)"></div>
<div class="a m" style="left:81px;top:138px">Throughput</div>
<div class="a" style="left:5px;top:155px;width:1232px;height:307px;background:#fff;border-left:1px solid #696969;border-top:1px solid #696969;border-right:1px solid #696969;border-bottom:1px solid #696969"></div>
<div class="a" style="left:6px;top:156px;width:1214px;height:35px;background:#f0f0f0;border-top:1px solid #fff;border-left:1px solid #fff"></div>
<div class="a" style="left:6px;top:191px;width:1214px;height:1px;background:#000"></div>
<div class="a" style="left:139px;top:156px;width:1px;height:35px;background:#000"></div>
<div class="a" style="left:140px;top:156px;width:1px;height:35px;background:#fff"></div>
<div class="a" style="left:137px;top:157px;width:2px;height:34px;background:linear-gradient(90deg,#f8f8f8 1px,#b0b0b0 1px)"></div>
<div class="a m" style="left:10px;top:174px;line-height:11px">Group</div>
<div class="a" style="left:211px;top:156px;width:1px;height:35px;background:#000"></div>
<div class="a" style="left:212px;top:156px;width:1px;height:35px;background:#fff"></div>
<div class="a" style="left:209px;top:157px;width:2px;height:34px;background:linear-gradient(90deg,#f8f8f8 1px,#b0b0b0 1px)"></div>
<div class="a m" style="left:144px;top:163px;line-height:11px">Pair Group
Name</div>
<div class="a" style="left:283px;top:156px;width:1px;height:35px;background:#000"></div>
<div class="a" style="left:284px;top:156px;width:1px;height:35px;background:#fff"></div>
<div class="a" style="left:281px;top:157px;width:2px;height:34px;background:linear-gradient(90deg,#f8f8f8 1px,#b0b0b0 1px)"></div>
<div class="a m" style="left:216px;top:174px;line-height:11px">Run Status</div>
<div class="a" style="left:379px;top:156px;width:1px;height:35px;background:#000"></div>
<div class="a" style="left:380px;top:156px;width:1px;height:35px;background:#fff"></div>
<div class="a" style="left:377px;top:157px;width:2px;height:34px;background:linear-gradient(90deg,#f8f8f8 1px,#b0b0b0 1px)"></div>
<div class="a m r" style="left:284px;width:91px;top:163px;line-height:11px">Timing Records
Completed</div>
<div class="a" style="left:475px;top:156px;width:1px;height:35px;background:#000"></div>
<div class="a" style="left:476px;top:156px;width:1px;height:35px;background:#fff"></div>
<div class="a" style="left:473px;top:157px;width:2px;height:34px;background:linear-gradient(90deg,#f8f8f8 1px,#b0b0b0 1px)"></div>
<div class="a m r" style="left:380px;width:91px;top:163px;line-height:11px">95% Confidence
Interval</div>
<div class="a" style="left:544px;top:156px;width:1px;height:35px;background:#000"></div>
<div class="a" style="left:545px;top:156px;width:1px;height:35px;background:#fff"></div>
<div class="a" style="left:542px;top:157px;width:2px;height:34px;background:linear-gradient(90deg,#f8f8f8 1px,#b0b0b0 1px)"></div>
<div class="a m r" style="left:476px;width:64px;top:163px;line-height:11px">Average
(Mbps)</div>
<div class="a" style="left:599px;top:156px;width:1px;height:35px;background:#000"></div>
<div class="a" style="left:600px;top:156px;width:1px;height:35px;background:#fff"></div>
<div class="a" style="left:597px;top:157px;width:2px;height:34px;background:linear-gradient(90deg,#f8f8f8 1px,#b0b0b0 1px)"></div>
<div class="a m r" style="left:545px;width:50px;top:163px;line-height:11px">Minimum
(Mbps)</div>
<div class="a" style="left:654px;top:156px;width:1px;height:35px;background:#000"></div>
<div class="a" style="left:655px;top:156px;width:1px;height:35px;background:#fff"></div>
<div class="a" style="left:652px;top:157px;width:2px;height:34px;background:linear-gradient(90deg,#f8f8f8 1px,#b0b0b0 1px)"></div>
<div class="a m r" style="left:600px;width:50px;top:163px;line-height:11px">Maximum
(Mbps)</div>
<div class="a" style="left:726px;top:156px;width:1px;height:35px;background:#000"></div>
<div class="a" style="left:727px;top:156px;width:1px;height:35px;background:#fff"></div>
<div class="a" style="left:724px;top:157px;width:2px;height:34px;background:linear-gradient(90deg,#f8f8f8 1px,#b0b0b0 1px)"></div>
<div class="a m r" style="left:655px;width:67px;top:163px;line-height:11px">Measured
Time (sec)</div>
<div class="a" style="left:792px;top:156px;width:1px;height:35px;background:#000"></div>
<div class="a" style="left:793px;top:156px;width:1px;height:35px;background:#fff"></div>
<div class="a" style="left:790px;top:157px;width:2px;height:34px;background:linear-gradient(90deg,#f8f8f8 1px,#b0b0b0 1px)"></div>
<div class="a m r" style="left:727px;width:61px;top:163px;line-height:11px">Relative
Precision</div>
<div class="a" style="left:1220px;top:156px;width:16px;height:289px;background:#f0f0f0"></div>
<div class="a" style="left:6px;top:445px;width:1230px;height:16px;background:#f0f0f0"></div>
<svg class="a" style="left:1222px;top:160px" width="12" height="10" viewBox="0 0 12 10"><path d="M2.500 7.500l3.500-3.500l3.500 3.500" stroke="#bcbcbc" stroke-width="2" fill="none"/></svg>
<svg class="a" style="left:1222px;top:431px" width="12" height="10" viewBox="0 0 12 10"><path d="M2.500 2.500l3.500 3.500l3.500-3.500" stroke="#bcbcbc" stroke-width="2" fill="none"/></svg>
<svg class="a" style="left:9px;top:447px" width="10" height="12" viewBox="0 0 10 12"><path d="M7 2.500l-3.500 3.500l3.500 3.500" stroke="#bcbcbc" stroke-width="2" fill="none"/></svg>
<svg class="a" style="left:1206px;top:447px" width="10" height="12" viewBox="0 0 10 12"><path d="M3 2.500l3.500 3.500l-3.500 3.500" stroke="#bcbcbc" stroke-width="2" fill="none"/></svg>
<div class="row" style="top:192px"><span class="c" style="left:27px;top:3px;width:11px;height:11px;border:1px solid #000;background:#d8d8d8;box-shadow:inset 1px 1px 0 #fff"></span><span class="c" style="left:30px;top:8px;width:5px;height:1px;background:#000"></span><span class="c m bd" style="left:47px">All Pairs</span><span class="c m r bd" style="left:278px;width:94px">1,848</span><span class="c m r bd" style="left:469px;width:69px">1,232.226</span><span class="c m r bd" style="left:538px;width:54px">234.604</span><span class="c m r bd" style="left:593px;width:54px">338.983</span></div>
<div class="row sel" style="top:208px;background:#0078d7;outline:1px dotted #e8a060;outline-offset:-1px"><svg class="c" style="left:6px;top:3px" width="14" height="13" viewBox="0 0 14 13"><path d="M1.500 1.500v10M3.500 0v5" stroke="#222" stroke-width="1"/><path d="M1 10.200h12" stroke="#8c8c8c" stroke-width="1"/><path d="M1 11.300h12.500" stroke="#1a1a1a" stroke-width="1.200"/><rect x="2.900" y="5" width="2.800" height="5" fill="#0808d8"/><rect x="5.800" y="1.300" width="2.800" height="8.700" fill="#f2f000"/><rect x="5.800" y="1" width="2.800" height="1" fill="#e8a020"/><rect x="8.900" y="2.800" width="2.400" height="7.400" fill="#e80000"/><rect x="11.200" y="2.500" width=".9" height="7.700" fill="#5a0000"/><path d="M5.700 4.500v5.500M8.750 2v8" stroke="#222" stroke-width=".5"/></svg><span class="c" style="left:50px;top:0;width:1px;height:16px;background:#fff"></span><span class="c" style="left:50px;top:8px;width:18px;height:1px;background:#fff"></span><span class="c m" style="left:95px">Pair 1 No Group</span><span class="c m" style="left:209px">Finished</span><span class="c m r" style="left:278px;width:92px">463</span><span class="c m" style="left:377px">-1.362 : +1.362</span><span class="c m r" style="left:469px;width:66px">309.943</span><span class="c m r" style="left:538px;width:52px">244.648</span><span class="c m r" style="left:593px;width:52px">338.983</span><span class="c m r" style="left:648px;width:69.500px">119.506</span><span class="c m r" style="left:719px;width:64px">0.439</span></div>
<div class="row" style="top:224px;"><svg class="c" style="left:6px;top:3px" width="14" height="13" viewBox="0 0 14 13"><path d="M1.500 1.500v10M3.500 0v5" stroke="#222" stroke-width="1"/><path d="M1 10.200h12" stroke="#8c8c8c" stroke-width="1"/><path d="M1 11.300h12.500" stroke="#1a1a1a" stroke-width="1.200"/><rect x="2.900" y="5" width="2.800" height="5" fill="#0808d8"/><rect x="5.800" y="1.300" width="2.800" height="8.700" fill="#f2f000"/><rect x="5.800" y="1" width="2.800" height="1" fill="#e8a020"/><rect x="8.900" y="2.800" width="2.400" height="7.400" fill="#e80000"/><rect x="11.200" y="2.500" width=".9" height="7.700" fill="#5a0000"/><path d="M5.700 4.500v5.500M8.750 2v8" stroke="#222" stroke-width=".5"/></svg><span class="c" style="left:50px;top:0;width:1px;height:16px;background-image:linear-gradient(#000 1px,transparent 1px);background-size:1px 2px"></span><span class="c" style="left:50px;top:8px;width:18px;height:1px;background-image:linear-gradient(90deg,#000 1px,transparent 1px);background-size:2px 1px"></span><span class="c m" style="left:95px">Pair 2 No Group</span><span class="c m" style="left:209px">Finished</span><span class="c m r" style="left:278px;width:92px">461</span><span class="c m" style="left:377px">-1.199 : +1.199</span><span class="c m r" style="left:469px;width:66px">308.140</span><span class="c m r" style="left:538px;width:52px">250.784</span><span class="c m r" style="left:593px;width:52px">327.869</span><span class="c m r" style="left:648px;width:69.500px">119.686</span><span class="c m r" style="left:719px;width:64px">0.389</span></div>
<div class="row" style="top:240px;"><svg class="c" style="left:6px;top:3px" width="14" height="13" viewBox="0 0 14 13"><path d="M1.500 1.500v10M3.500 0v5" stroke="#222" stroke-width="1"/><path d="M1 10.200h12" stroke="#8c8c8c" stroke-width="1"/><path d="M1 11.300h12.500" stroke="#1a1a1a" stroke-width="1.200"/><rect x="2.900" y="5" width="2.800" height="5" fill="#0808d8"/><rect x="5.800" y="1.300" width="2.800" height="8.700" fill="#f2f000"/><rect x="5.800" y="1" width="2.800" height="1" fill="#e8a020"/><rect x="8.900" y="2.800" width="2.400" height="7.400" fill="#e80000"/><rect x="11.200" y="2.500" width=".9" height="7.700" fill="#5a0000"/><path d="M5.700 4.500v5.500M8.750 2v8" stroke="#222" stroke-width=".5"/></svg><span class="c" style="left:50px;top:0;width:1px;height:16px;background-image:linear-gradient(#000 1px,transparent 1px);background-size:1px 2px"></span><span class="c" style="left:50px;top:8px;width:18px;height:1px;background-image:linear-gradient(90deg,#000 1px,transparent 1px);background-size:2px 1px"></span><span class="c m" style="left:95px">Pair 3 No Group</span><span class="c m" style="left:209px">Finished</span><span class="c m r" style="left:278px;width:92px">459</span><span class="c m" style="left:377px">-1.360 : +1.360</span><span class="c m r" style="left:469px;width:66px">306.631</span><span class="c m r" style="left:538px;width:52px">234.604</span><span class="c m r" style="left:593px;width:52px">336.134</span><span class="c m r" style="left:648px;width:69.500px">119.753</span><span class="c m r" style="left:719px;width:64px">0.443</span></div>
<div class="row" style="top:256px;"><svg class="c" style="left:6px;top:3px" width="14" height="13" viewBox="0 0 14 13"><path d="M1.500 1.500v10M3.500 0v5" stroke="#222" stroke-width="1"/><path d="M1 10.200h12" stroke="#8c8c8c" stroke-width="1"/><path d="M1 11.300h12.500" stroke="#1a1a1a" stroke-width="1.200"/><rect x="2.900" y="5" width="2.800" height="5" fill="#0808d8"/><rect x="5.800" y="1.300" width="2.800" height="8.700" fill="#f2f000"/><rect x="5.800" y="1" width="2.800" height="1" fill="#e8a020"/><rect x="8.900" y="2.800" width="2.400" height="7.400" fill="#e80000"/><rect x="11.200" y="2.500" width=".9" height="7.700" fill="#5a0000"/><path d="M5.700 4.500v5.500M8.750 2v8" stroke="#222" stroke-width=".5"/></svg><span class="c" style="left:50px;top:0;width:1px;height:9px;background-image:linear-gradient(#000 1px,transparent 1px);background-size:1px 2px"></span><span class="c" style="left:50px;top:8px;width:18px;height:1px;background-image:linear-gradient(90deg,#000 1px,transparent 1px);background-size:2px 1px"></span><span class="c m" style="left:95px">Pair 4 No Group</span><span class="c m" style="left:209px">Finished</span><span class="c m r" style="left:278px;width:92px">465</span><span class="c m" style="left:377px">-1.238 : +1.238</span><span class="c m r" style="left:469px;width:66px">310.759</span><span class="c m r" style="left:538px;width:52px">247.678</span><span class="c m r" style="left:593px;width:52px">333.333</span><span class="c m r" style="left:648px;width:69.500px">119.707</span><span class="c m r" style="left:719px;width:64px">0.398</span></div>
<div class="a" style="left:5px;top:461px;width:1232px;height:9px;background:#c0c0c0;border-top:1px solid #646464;border-bottom:1px solid #6e6e6e"></div>
<div class="a" style="left:5px;top:470px;width:979px;height:374px;background:#fff"></div>
<div class="a" style="left:984px;top:470px;width:8px;height:374px;background:#c0c0c0;border-left:1px solid #808080;border-right:1px solid #696969"></div>
<div class="a" style="left:16px;top:478px;font-family:'Liberation Serif',serif;font-size:18px;line-height:22px;letter-spacing:1.35px;white-space:pre">Throughput</div>
<svg class="a" style="left:0;top:470px" width="984" height="376" viewBox="0 470 984 376" font-family="Liberation Sans,sans-serif" font-size="11"><g shape-rendering="crispEdges" fill="none"><path d="M73 776.5H949 M73 751.5H949 M73 725.5H949 M73 700.5H949 M73 674.5H949 M73 649.5H949 M73 623.5H949 M73 598.5H949 M73 572.5H949 M73 547.5H949 M73 521.5H949 M218.5 508V801 M364.5 508V801 M510.5 508V801 M655.5 508V801 M801.5 508V801" stroke="#c0c0c0"/><path d="M72 507.500H949M72 801.500H948M947.500 507V802" stroke="#000"/><path d="M72.500 507V802" stroke="#000"/><polyline points="72.5,623.0 74.4,566.9 76.3,614.4 78.2,562.6 80.1,577.7 82.0,577.8 83.9,569.6 85.7,578.4 87.6,592.2 89.5,574.1 91.4,570.3 93.3,601.2 95.2,585.3 97.1,588.7 99.0,566.1 100.9,570.7 102.8,571.4 104.7,593.1 106.6,554.3 108.4,567.7 110.3,569.9 112.2,625.3 114.1,763.3 116.0,618.8 117.9,565.9 119.8,571.5 121.7,608.2 123.6,575.7 125.5,551.6 127.4,574.7 129.3,561.8 131.1,547.9 133.0,555.0 134.9,603.3 136.8,594.8 138.7,588.5 140.6,595.8 142.5,587.3 144.4,583.4 146.3,635.5 148.2,593.5 150.1,576.8 152.0,616.9 153.8,571.2 155.7,589.4 157.6,659.1 159.5,719.9 161.4,692.9 163.3,618.7 165.2,581.6 167.1,609.7 169.0,586.9 170.9,578.3 172.8,583.8 174.7,572.4 176.5,598.7 178.4,569.7 180.3,632.4 182.2,588.5 184.1,563.0 186.0,541.4 187.9,622.0 189.8,656.2 191.7,606.5 193.6,584.7 195.5,612.3 197.4,602.6 199.2,584.1 201.1,572.4 203.0,614.1 204.9,593.6 206.8,572.0 208.7,576.0 210.6,592.8 212.5,622.1 214.4,550.2 216.3,556.7 218.2,583.9 220.1,600.3 222.0,591.7 223.8,561.3 225.7,595.0 227.6,589.1 229.5,561.2 231.4,603.6 233.3,570.4 235.2,549.3 237.1,591.6 239.0,549.0 240.9,531.2 242.8,555.5 244.7,586.9 246.5,565.1 248.4,583.9 250.3,587.2 252.2,570.8 254.1,567.7 256.0,566.8 257.9,591.4 259.8,589.6 261.7,605.3 263.6,593.9 265.5,590.1 267.4,544.7 269.2,554.0 271.1,597.9 273.0,573.0 274.9,625.1 276.8,593.7 278.7,579.9 280.6,596.3 282.5,573.7 284.4,586.3 286.3,583.4 288.2,559.5 290.1,538.9 291.9,560.4 293.8,585.7 295.7,620.9 297.6,601.4 299.5,546.9 301.4,599.9 303.3,615.0 305.2,591.9 307.1,579.6 309.0,546.1 310.9,606.0 312.8,579.1 314.6,582.3 316.5,565.6 318.4,579.7 320.3,595.8 322.2,580.7 324.1,605.9 326.0,566.1 327.9,589.0 329.8,650.7 331.7,697.0 333.6,596.3 335.5,634.0 337.3,661.3 339.2,576.0 341.1,581.0 343.0,603.2 344.9,591.0 346.8,578.7 348.7,580.6 350.6,598.9 352.5,576.5 354.4,550.5 356.3,572.6 358.2,602.7 360.0,544.5 361.9,581.7 363.8,591.1 365.7,565.5 367.6,571.5 369.5,619.1 371.4,605.7 373.3,580.2 375.2,636.1 377.1,627.0 379.0,557.3 380.9,536.3 382.8,564.0 384.6,573.9 386.5,539.9 388.4,523.6 390.3,545.1 392.2,595.1 394.1,590.4 396.0,571.5 397.9,560.8 399.8,600.7 401.7,590.7 403.6,594.7 405.5,591.1 407.3,560.4 409.2,544.0 411.1,565.9 413.0,595.3 414.9,585.7 416.8,611.8 418.7,605.0 420.6,611.5 422.5,593.3 424.4,582.9 426.3,579.4 428.2,550.0 430.0,563.9 431.9,571.5 433.8,578.9 435.7,554.4 437.6,569.2 439.5,564.8 441.4,548.0 443.3,607.5 445.2,564.5 447.1,590.9 449.0,597.8 450.9,567.0 452.7,576.0 454.6,596.8 456.5,561.9 458.4,576.3 460.3,572.1 462.2,584.8 464.1,594.9 466.0,586.2 467.9,594.4 469.8,572.6 471.7,585.6 473.6,572.2 475.4,603.9 477.3,596.8 479.2,568.0 481.1,592.8 483.0,569.5 484.9,572.7 486.8,587.2 488.7,588.9 490.6,611.6 492.5,602.5 494.4,574.8 496.3,588.9 498.1,615.1 500.0,596.3 501.9,623.2 503.8,596.8 505.7,577.6 507.6,573.4 509.5,579.4 511.4,674.0 513.3,719.9 515.2,696.5 517.1,638.8 519.0,623.4 520.9,605.1 522.7,589.7 524.6,573.8 526.5,604.2 528.4,594.1 530.3,612.6 532.2,593.4 534.1,637.2 536.0,583.9 537.9,597.1 539.8,591.4 541.7,558.0 543.6,598.5 545.4,653.6 547.3,633.7 549.2,583.0 551.1,574.3 553.0,598.7 554.9,573.1 556.8,592.6 558.7,589.4 560.6,554.3 562.5,550.0 564.4,561.2 566.3,631.7 568.1,593.2 570.0,622.1 571.9,611.8 573.8,635.8 575.7,587.4 577.6,551.9 579.5,586.1 581.4,591.7 583.3,597.2 585.2,570.3 587.1,605.9 589.0,601.6 590.8,664.3 592.7,707.2 594.6,667.0 596.5,584.0 598.4,547.0 600.3,597.5 602.2,603.1 604.1,562.1 606.0,572.5 607.9,578.2 609.8,578.6 611.7,580.7 613.5,594.5 615.4,616.4 617.3,623.4 619.2,581.4 621.1,596.4 623.0,601.4 624.9,575.6 626.8,566.4 628.7,544.0 630.6,561.0 632.5,597.7 634.4,643.1 636.2,665.6 638.1,699.5 640.0,685.4 641.9,627.7 643.8,597.4 645.7,613.8 647.6,599.0 649.5,572.4 651.4,619.0 653.3,626.3 655.2,589.6 657.1,580.7 659.0,603.3 660.8,592.9 662.7,597.0 664.6,574.2 666.5,605.5 668.4,648.5 670.3,632.0 672.2,603.9 674.1,583.2 676.0,587.3 677.9,611.6 679.8,632.6 681.7,600.5 683.5,585.9 685.4,609.2 687.3,604.2 689.2,576.1 691.1,600.4 693.0,603.9 694.9,597.2 696.8,595.1 698.7,628.9 700.6,686.8 702.5,630.7 704.4,590.2 706.2,601.8 708.1,633.7 710.0,601.3 711.9,606.4 713.8,598.9 715.7,578.5 717.6,561.8 719.5,542.7 721.4,562.3 723.3,547.5 725.2,602.0 727.1,588.4 728.9,571.0 730.8,598.2 732.7,586.6 734.6,592.8 736.5,567.0 738.4,542.7 740.3,639.3 742.2,707.2 744.1,628.5 746.0,642.2 747.9,572.3 749.8,603.7 751.6,621.3 753.5,664.1 755.4,712.3 757.3,708.8 759.2,663.9 761.1,635.5 763.0,632.0 764.9,603.1 766.8,600.3 768.7,611.2 770.6,591.1 772.5,590.1 774.3,635.8 776.2,613.0 778.1,607.3 780.0,575.5 781.9,612.8 783.8,710.7 785.7,632.3 787.6,610.8 789.5,635.6 791.4,596.3 793.3,554.8 795.2,565.6 797.0,587.3 798.9,589.0 800.8,582.5 802.7,580.8 804.6,557.0 806.5,545.5 808.4,572.9 810.3,600.6 812.2,581.9 814.1,572.3 816.0,549.4 817.9,585.6 819.8,612.3 821.6,564.7 823.5,588.2 825.4,556.9 827.3,566.1 829.2,585.3 831.1,570.4 833.0,584.5 834.9,574.3 836.8,574.1 838.7,568.4 840.6,614.0 842.5,605.1 844.3,646.0 846.2,644.8 848.1,622.5 850.0,623.1 851.9,632.4 853.8,622.1 855.7,609.2 857.6,672.4 859.5,691.9 861.4,669.9 863.3,624.4 865.2,622.7 867.0,656.4 868.9,694.4 870.8,636.7 872.7,646.4 874.6,602.2 876.5,603.3 878.4,621.5 880.3,566.9 882.2,666.4 884.1,630.7 886.0,599.9 887.9,571.9 889.7,613.3 891.6,600.0 893.5,588.1 895.4,609.9 897.3,604.1 899.2,630.9 901.1,660.1 903.0,699.5 904.9,642.7 906.8,595.4 908.7,580.5 910.6,611.6 912.4,556.3 914.3,578.1 916.2,561.2 918.1,628.5 920.0,590.6 921.9,591.6 923.8,582.0 925.7,554.9 927.6,581.2 929.5,609.7 931.4,607.1 933.3,670.2 935.1,674.0 937.0,623.7 938.9,583.9 940.8,550.3 942.7,625.1 944.6,583.0 946.5,581.4" stroke="#ff0000" stroke-width="1"/><polyline points="72.5,686.8 74.4,582.2 76.3,591.8 78.2,613.6 80.1,593.9 82.0,579.9 83.9,591.8 85.8,606.6 87.7,565.9 89.6,562.3 91.5,576.6 93.4,590.8 95.3,591.8 97.2,569.2 99.1,605.7 101.0,578.0 102.9,589.4 104.8,590.2 106.7,575.8 108.6,599.6 110.5,594.2 112.4,642.7 114.3,704.6 116.2,590.1 118.1,614.7 120.0,581.4 121.9,563.5 123.8,567.1 125.7,572.6 127.6,579.9 129.5,570.3 131.4,581.4 133.3,569.0 135.2,552.1 137.1,572.7 139.0,602.2 140.9,594.7 142.8,593.6 144.7,599.8 146.6,571.2 148.5,582.7 150.4,602.0 152.3,602.9 154.2,653.6 156.1,630.6 158.0,702.7 159.9,750.5 161.8,709.6 163.7,655.7 165.6,578.7 167.5,595.1 169.4,600.9 171.3,615.7 173.2,597.5 175.1,603.8 177.0,573.1 178.9,584.6 180.8,575.1 182.7,602.2 184.6,592.2 186.5,598.5 188.4,661.3 190.3,633.7 192.2,593.8 194.1,598.7 196.0,579.4 197.9,583.1 199.8,576.8 201.7,593.1 203.6,599.0 205.5,626.5 207.4,598.4 209.3,609.0 211.2,604.4 213.1,606.1 215.0,576.8 216.9,596.3 218.8,593.1 220.7,595.0 222.6,579.4 224.5,585.3 226.4,553.3 228.3,574.8 230.2,573.6 232.1,584.2 234.0,559.0 235.9,568.9 237.8,597.1 239.7,560.2 241.6,573.9 243.5,592.1 245.4,590.5 247.3,586.7 249.2,597.9 251.1,595.1 253.0,573.7 254.9,584.9 256.8,562.9 258.7,568.8 260.6,576.3 262.5,583.8 264.4,597.1 266.3,601.2 268.2,583.1 270.1,592.1 272.0,572.7 273.9,597.7 275.8,582.4 277.7,578.3 279.6,572.3 281.5,575.6 283.4,579.1 285.3,589.5 287.2,591.8 289.1,581.7 291.0,588.3 292.9,591.6 294.8,583.5 296.7,597.4 298.6,605.6 300.5,591.3 302.4,584.4 304.3,582.3 306.2,582.1 308.1,570.1 310.0,578.8 311.9,563.8 313.8,571.8 315.7,578.2 317.6,599.1 319.5,590.3 321.4,591.8 323.3,578.1 325.2,593.0 327.1,606.5 329.0,583.5 330.9,597.8 332.8,595.5 334.7,662.8 336.6,681.7 338.5,614.4 340.4,577.9 342.3,582.9 344.2,604.8 346.1,581.9 348.0,562.3 349.9,618.0 351.8,569.5 353.7,567.2 355.6,584.9 357.5,574.8 359.4,578.8 361.3,606.0 363.2,575.1 365.1,589.7 367.0,602.5 368.9,593.6 370.8,603.6 372.7,584.3 374.6,582.5 376.5,602.3 378.4,596.9 380.3,571.4 382.2,610.8 384.1,586.0 386.0,609.7 387.9,587.1 389.8,585.7 391.7,584.7 393.6,591.9 395.5,605.5 397.4,588.5 399.3,602.3 401.2,590.9 403.1,592.5 405.0,574.8 406.9,612.2 408.8,587.7 410.7,596.9 412.6,576.7 414.5,574.6 416.4,579.4 418.3,588.9 420.2,596.8 422.1,596.3 424.0,609.0 425.9,582.3 427.8,579.0 429.7,595.0 431.6,591.8 433.5,582.9 435.4,581.8 437.3,604.0 439.2,593.2 441.1,586.5 443.0,587.1 444.9,573.5 446.8,553.1 448.7,608.1 450.6,600.3 452.5,588.2 454.4,589.4 456.3,560.1 458.2,574.5 460.1,587.7 462.0,583.0 463.9,551.4 465.8,616.1 467.7,602.8 469.6,572.4 471.5,594.0 473.4,585.6 475.3,610.3 477.2,584.2 479.1,586.5 481.0,585.7 482.9,616.2 484.8,594.8 486.7,597.3 488.6,600.0 490.5,575.7 492.4,609.8 494.3,570.2 496.2,599.0 498.1,565.7 500.0,603.9 501.9,617.2 503.8,596.0 505.7,630.9 507.6,653.6 509.5,638.2 511.4,634.4 513.3,658.7 515.2,657.1 517.1,626.6 519.0,598.4 520.9,606.4 522.8,604.6 524.7,586.8 526.6,589.8 528.5,604.6 530.4,590.5 532.3,599.7 534.2,577.7 536.1,578.6 538.0,610.1 539.9,610.7 541.8,596.6 543.7,624.3 545.6,663.8 547.5,653.2 549.4,590.4 551.3,592.7 553.2,617.0 555.1,598.9 557.0,585.1 558.9,588.6 560.8,575.7 562.7,593.9 564.6,595.0 566.5,573.4 568.4,615.2 570.3,599.7 572.2,554.3 574.1,582.4 576.0,575.3 577.9,566.0 579.8,586.1 581.7,574.4 583.6,571.4 585.5,609.1 587.4,588.6 589.3,576.2 591.2,653.2 593.1,674.0 595.0,606.2 596.9,570.6 598.8,593.1 600.7,585.7 602.6,560.0 604.5,591.3 606.4,605.8 608.3,588.0 610.2,572.0 612.1,607.9 614.0,610.8 615.9,592.2 617.8,607.8 619.7,583.1 621.6,617.6 623.5,568.3 625.4,586.6 627.3,573.0 629.2,587.8 631.1,601.9 633.0,620.4 634.9,662.4 636.8,712.3 638.7,719.9 640.6,663.7 642.5,601.7 644.4,582.3 646.3,599.5 648.2,586.0 650.1,609.6 652.0,595.1 653.9,599.6 655.8,631.0 657.7,615.4 659.6,597.9 661.5,588.0 663.4,596.6 665.3,600.8 667.2,648.5 669.1,648.5 671.0,607.5 672.9,599.2 674.8,615.0 676.7,583.8 678.6,580.0 680.5,580.6 682.4,555.7 684.3,600.8 686.2,608.5 688.1,610.3 690.0,624.7 691.9,666.4 693.8,617.4 695.7,631.0 697.6,579.5 699.5,593.7 701.4,599.0 703.3,585.2 705.2,624.2 707.1,641.9 709.0,608.1 710.9,633.2 712.8,572.6 714.7,573.1 716.6,560.7 718.5,596.7 720.4,587.7 722.3,596.0 724.2,581.7 726.1,580.0 728.0,593.5 729.9,583.4 731.8,600.9 733.7,571.3 735.6,565.7 737.5,573.6 739.4,591.1 741.3,648.5 743.2,616.7 745.1,607.6 747.0,582.4 748.9,550.3 750.8,615.4 752.7,636.2 754.6,699.3 756.5,699.5 758.4,673.6 760.3,621.4 762.2,618.9 764.1,565.5 766.0,611.4 767.9,617.7 769.8,645.8 771.7,606.9 773.6,638.5 775.5,583.5 777.4,592.0 779.3,610.4 781.2,621.3 783.1,612.2 785.0,578.1 786.9,609.0 788.8,616.9 790.7,599.2 792.6,579.5 794.5,592.8 796.4,595.6 798.3,569.2 800.2,609.6 802.1,573.5 804.0,600.6 805.9,605.2 807.8,576.7 809.7,602.0 811.6,591.6 813.5,576.2 815.4,602.4 817.3,562.6 819.2,610.0 821.1,579.3 823.0,597.5 824.9,574.6 826.8,596.6 828.7,611.1 830.6,589.4 832.5,601.2 834.4,601.3 836.3,554.5 838.2,566.0 840.1,572.3 842.0,646.1 843.9,615.2 845.8,611.8 847.7,653.2 849.6,643.5 851.5,628.2 853.4,661.3 855.3,661.3 857.2,640.8 859.1,641.3 861.0,641.0 862.9,623.7 864.8,631.8 866.7,638.0 868.6,652.6 870.5,631.6 872.4,631.1 874.3,581.1 876.2,601.6 878.1,604.8 880.0,595.2 881.9,602.0 883.8,607.1 885.7,608.1 887.6,583.8 889.5,605.4 891.4,599.8 893.3,622.1 895.2,624.0 897.1,569.3 899.0,624.1 900.9,614.4 902.8,597.8 904.7,603.2 906.6,586.9 908.5,581.1 910.4,611.2 912.3,596.5 914.2,588.4 916.1,588.8 918.0,590.3 919.9,622.8 921.8,577.6 923.7,560.8 925.6,597.7 927.5,594.7 929.4,586.9 931.3,591.8 933.2,645.0 935.1,698.0 937.0,657.6 938.9,604.4 940.8,579.1 942.7,575.1 944.6,559.3 946.5,581.7" stroke="#00ff00" stroke-width="1"/><polyline points="72.5,666.4 74.4,623.0 76.3,620.1 78.2,603.2 80.1,580.8 82.0,619.0 83.9,600.2 85.9,561.7 87.8,575.0 89.7,549.1 91.6,572.3 93.5,576.1 95.4,580.9 97.3,582.8 99.2,611.6 101.1,609.2 103.0,616.4 104.9,620.5 106.8,561.0 108.8,599.7 110.7,619.4 112.6,686.0 114.5,745.4 116.4,586.8 118.3,606.9 120.2,593.0 122.1,599.6 124.0,601.3 125.9,586.2 127.8,601.7 129.7,565.7 131.7,584.3 133.6,577.1 135.5,571.8 137.4,545.2 139.3,561.8 141.2,616.6 143.1,648.5 145.0,597.8 146.9,590.2 148.8,594.5 150.7,598.2 152.6,588.3 154.6,567.0 156.5,626.6 158.4,688.0 160.3,704.6 162.2,637.7 164.1,636.2 166.0,601.7 167.9,557.4 169.8,568.7 171.7,569.6 173.6,595.7 175.5,586.4 177.5,587.4 179.4,607.6 181.3,613.8 183.2,627.7 185.1,581.9 187.0,602.8 188.9,643.4 190.8,617.6 192.7,567.9 194.6,609.7 196.5,572.3 198.4,591.7 200.4,606.5 202.3,639.6 204.2,653.6 206.1,647.6 208.0,593.5 209.9,604.6 211.8,597.7 213.7,612.8 215.6,590.2 217.5,604.5 219.4,584.7 221.3,605.9 223.3,605.7 225.2,601.1 227.1,605.5 229.0,565.7 230.9,603.6 232.8,593.1 234.7,593.5 236.6,610.3 238.5,605.0 240.4,619.6 242.3,563.7 244.2,544.0 246.2,563.2 248.1,566.1 250.0,560.0 251.9,583.8 253.8,558.8 255.7,609.3 257.6,583.7 259.5,576.4 261.4,546.2 263.3,620.5 265.2,599.6 267.1,575.5 269.1,578.8 271.0,599.5 272.9,569.5 274.8,578.3 276.7,581.1 278.6,592.4 280.5,601.5 282.4,576.7 284.3,586.4 286.2,588.3 288.1,563.9 290.0,566.1 292.0,622.7 293.9,582.3 295.8,634.8 297.7,574.8 299.6,592.4 301.5,611.3 303.4,610.4 305.3,584.4 307.2,598.0 309.1,573.5 311.0,621.4 312.9,601.6 314.9,593.1 316.8,600.9 318.7,604.9 320.6,592.0 322.5,605.8 324.4,611.4 326.3,571.0 328.2,587.7 330.1,597.6 332.0,594.5 333.9,616.2 335.8,750.5 337.8,690.9 339.7,601.0 341.6,597.8 343.5,619.7 345.4,608.2 347.3,579.8 349.2,560.1 351.1,583.8 353.0,607.1 354.9,620.0 356.8,571.6 358.7,631.1 360.7,617.4 362.6,595.3 364.5,619.1 366.4,577.9 368.3,568.2 370.2,594.0 372.1,619.7 374.0,566.1 375.9,577.6 377.8,580.7 379.7,601.1 381.6,603.3 383.6,594.1 385.5,598.9 387.4,563.3 389.3,592.7 391.2,597.8 393.1,636.5 395.0,558.3 396.9,615.5 398.8,588.9 400.7,569.9 402.6,616.2 404.5,635.3 406.5,593.1 408.4,606.5 410.3,587.7 412.2,588.9 414.1,570.5 416.0,610.6 417.9,615.0 419.8,570.6 421.7,567.1 423.6,551.6 425.5,531.0 427.4,555.7 429.4,609.2 431.3,572.3 433.2,595.1 435.1,594.7 437.0,600.1 438.9,552.7 440.8,602.2 442.7,597.4 444.6,613.5 446.5,581.3 448.4,592.5 450.3,617.3 452.3,606.2 454.2,579.8 456.1,602.1 458.0,629.4 459.9,615.0 461.8,577.0 463.7,553.7 465.6,579.1 467.5,585.0 469.4,563.8 471.3,542.2 473.2,562.9 475.2,596.0 477.1,560.6 479.0,598.4 480.9,598.7 482.8,605.9 484.7,614.9 486.6,606.3 488.5,605.3 490.4,608.0 492.3,599.2 494.2,590.3 496.1,548.7 498.1,576.3 500.0,578.8 501.9,632.6 503.8,624.7 505.7,643.9 507.6,679.1 509.5,637.5 511.4,635.6 513.3,658.7 515.2,652.5 517.1,626.8 519.0,557.1 520.9,597.9 522.9,604.5 524.8,628.2 526.7,575.7 528.6,641.4 530.5,602.8 532.4,594.5 534.3,621.1 536.2,562.6 538.1,572.4 540.0,573.7 541.9,590.7 543.8,655.9 545.8,730.1 547.7,663.1 549.6,600.2 551.5,564.3 553.4,616.7 555.3,561.3 557.2,644.7 559.1,608.7 561.0,567.8 562.9,595.4 564.8,616.0 566.7,571.3 568.7,641.1 570.6,608.5 572.5,640.9 574.4,611.0 576.3,567.7 578.2,610.5 580.1,602.6 582.0,575.4 583.9,632.8 585.8,588.4 587.7,607.6 589.6,626.7 591.6,686.8 593.5,662.0 595.4,606.7 597.3,587.4 599.2,585.3 601.1,601.3 603.0,590.2 604.9,635.1 606.8,602.4 608.7,595.7 610.6,593.6 612.5,582.0 614.5,550.7 616.4,548.0 618.3,585.6 620.2,585.6 622.1,575.7 624.0,607.9 625.9,598.7 627.8,565.5 629.7,617.4 631.6,615.5 633.5,651.6 635.4,702.2 637.4,789.8 639.3,743.3 641.2,696.0 643.1,618.2 645.0,602.2 646.9,591.0 648.8,595.3 650.7,582.4 652.6,579.5 654.5,611.0 656.4,567.3 658.3,610.3 660.3,577.8 662.2,612.0 664.1,598.9 666.0,588.7 667.9,703.7 669.8,717.4 671.7,594.2 673.6,592.9 675.5,615.1 677.4,583.1 679.3,603.8 681.2,569.6 683.2,611.5 685.1,613.6 687.0,618.0 688.9,624.7 690.8,642.6 692.7,648.5 694.6,633.4 696.5,602.0 698.4,578.1 700.3,650.0 702.2,617.7 704.1,645.2 706.1,627.1 708.0,611.7 709.9,607.7 711.8,575.3 713.7,584.0 715.6,615.2 717.5,608.5 719.4,635.8 721.3,619.5 723.2,605.2 725.1,580.9 727.0,586.9 729.0,586.7 730.9,609.8 732.8,571.2 734.7,572.3 736.6,592.1 738.5,607.4 740.4,656.3 742.3,658.7 744.2,647.5 746.1,643.8 748.0,649.0 749.9,598.3 751.9,623.5 753.8,689.0 755.7,728.9 757.6,697.1 759.5,653.2 761.4,570.0 763.3,561.7 765.2,534.8 767.1,555.1 769.0,618.3 770.9,622.9 772.8,657.4 774.8,702.1 776.7,667.1 778.6,608.7 780.5,568.7 782.4,645.3 784.3,610.8 786.2,643.8 788.1,615.9 790.0,615.0 791.9,566.1 793.8,574.6 795.7,557.6 797.7,596.6 799.6,604.6 801.5,623.0 803.4,593.1 805.3,624.9 807.2,587.3 809.1,589.5 811.0,608.9 812.9,577.4 814.8,602.5 816.7,626.3 818.6,596.3 820.6,633.0 822.5,596.6 824.4,608.2 826.3,617.7 828.2,598.9 830.1,637.6 832.0,618.4 833.9,568.1 835.8,588.2 837.7,595.6 839.6,608.4 841.5,644.2 843.5,630.5 845.4,611.5 847.3,614.0 849.2,646.7 851.1,662.4 853.0,694.4 854.9,694.4 856.8,653.2 858.7,648.3 860.6,684.2 862.5,637.3 864.4,646.3 866.4,643.6 868.3,668.9 870.2,646.7 872.1,647.1 874.0,654.8 875.9,594.7 877.8,644.0 879.7,625.9 881.6,553.4 883.5,610.2 885.4,607.7 887.3,568.9 889.3,549.6 891.2,573.8 893.1,643.4 895.0,595.2 896.9,583.6 898.8,612.3 900.7,625.1 902.6,658.7 904.5,645.4 906.4,602.5 908.3,644.7 910.2,611.2 912.2,611.7 914.1,575.7 916.0,549.6 917.9,563.8 919.8,572.3 921.7,644.7 923.6,670.2 925.5,603.2 927.4,606.7 929.3,606.3 931.2,623.1 933.1,680.1 935.1,732.7 937.0,668.8 938.9,632.9 940.8,612.5 942.7,598.4 944.6,577.2 946.5,575.2" stroke="#ff00ff" stroke-width="1"/><polyline points="72.5,635.8 74.4,577.1 76.3,565.2 78.2,574.4 80.0,563.9 81.9,577.3 83.8,620.5 85.7,588.9 87.6,581.6 89.5,583.9 91.3,598.2 93.2,599.4 95.1,607.4 97.0,587.2 98.9,574.7 100.8,578.7 102.6,559.7 104.5,583.4 106.4,560.8 108.3,562.1 110.2,560.3 112.1,647.8 113.9,755.6 115.8,618.2 117.7,570.3 119.6,556.9 121.5,538.1 123.4,555.8 125.2,594.6 127.1,588.8 129.0,548.8 130.9,597.5 132.8,592.1 134.7,590.5 136.5,588.2 138.4,561.1 140.3,571.0 142.2,586.2 144.1,594.5 146.0,596.8 147.8,570.5 149.7,591.7 151.6,586.7 153.5,630.7 155.4,618.2 157.3,640.8 159.1,699.5 161.0,678.7 162.9,655.8 164.8,600.8 166.7,590.7 168.6,572.6 170.4,591.4 172.3,579.0 174.2,568.5 176.1,590.0 178.0,615.4 179.9,591.4 181.8,589.4 183.6,554.6 185.5,588.9 187.4,606.2 189.3,581.9 191.2,567.7 193.1,552.1 194.9,574.3 196.8,572.7 198.7,602.5 200.6,600.8 202.5,579.4 204.4,640.9 206.2,613.7 208.1,584.6 210.0,583.9 211.9,571.6 213.8,585.2 215.7,624.3 217.5,565.2 219.4,625.0 221.3,588.0 223.2,580.4 225.1,594.4 227.0,593.6 228.8,549.4 230.7,590.6 232.6,580.9 234.5,581.2 236.4,616.5 238.3,582.5 240.1,575.3 242.0,574.8 243.9,602.4 245.8,581.5 247.7,579.9 249.6,575.8 251.4,571.2 253.3,601.9 255.2,568.3 257.1,592.7 259.0,626.9 260.9,567.2 262.7,567.1 264.6,567.2 266.5,580.0 268.4,587.3 270.3,550.1 272.2,566.1 274.0,568.9 275.9,584.8 277.8,600.9 279.7,578.8 281.6,564.7 283.5,579.4 285.3,607.1 287.2,626.9 289.1,609.5 291.0,600.2 292.9,576.4 294.8,581.7 296.7,561.5 298.5,571.0 300.4,588.8 302.3,547.2 304.2,577.0 306.1,580.2 308.0,571.3 309.8,609.6 311.7,561.3 313.6,600.1 315.5,591.3 317.4,580.0 319.3,600.7 321.1,592.7 323.0,596.2 324.9,592.5 326.8,578.0 328.7,609.5 330.6,585.8 332.4,566.3 334.3,639.4 336.2,732.7 338.1,691.8 340.0,579.0 341.9,590.2 343.7,584.0 345.6,610.8 347.5,567.1 349.4,573.0 351.3,589.4 353.2,581.4 355.0,560.0 356.9,576.5 358.8,608.9 360.7,591.7 362.6,637.7 364.5,550.0 366.3,572.7 368.2,590.7 370.1,584.9 372.0,556.7 373.9,600.7 375.8,605.2 377.6,546.8 379.5,602.0 381.4,567.8 383.3,561.8 385.2,610.2 387.1,586.2 388.9,586.6 390.8,583.9 392.7,560.5 394.6,580.7 396.5,588.2 398.4,596.1 400.2,601.2 402.1,585.8 404.0,577.6 405.9,603.1 407.8,587.1 409.7,593.0 411.6,568.3 413.4,578.0 415.3,577.4 417.2,591.6 419.1,582.9 421.0,597.3 422.9,557.6 424.7,590.6 426.6,581.8 428.5,578.1 430.4,581.7 432.3,598.0 434.2,588.6 436.0,579.2 437.9,587.7 439.8,620.2 441.7,616.7 443.6,605.7 445.5,578.0 447.3,594.5 449.2,584.0 451.1,596.0 453.0,603.6 454.9,615.8 456.8,589.7 458.6,585.5 460.5,608.5 462.4,605.8 464.3,583.4 466.2,570.2 468.1,575.3 469.9,609.8 471.8,587.0 473.7,599.0 475.6,607.8 477.5,609.6 479.4,567.7 481.2,564.2 483.1,569.9 485.0,562.7 486.9,574.0 488.8,565.4 490.7,589.8 492.5,566.4 494.4,571.6 496.3,588.6 498.2,599.4 500.1,638.3 502.0,595.4 503.8,601.9 505.7,646.3 507.6,674.0 509.5,663.8 511.4,649.1 513.3,663.8 515.2,643.4 517.0,647.5 518.9,624.5 520.8,584.1 522.7,622.2 524.6,597.3 526.5,583.9 528.3,577.2 530.2,570.0 532.1,546.5 534.0,562.2 535.9,587.3 537.8,602.6 539.6,599.3 541.5,569.9 543.4,610.5 545.3,719.9 547.2,651.6 549.1,633.4 550.9,590.3 552.8,580.5 554.7,598.4 556.6,566.1 558.5,585.9 560.4,573.7 562.2,604.0 564.1,574.5 566.0,580.8 567.9,598.5 569.8,619.1 571.7,587.7 573.5,619.0 575.4,587.3 577.3,589.1 579.2,578.4 581.1,569.8 583.0,565.4 584.8,594.9 586.7,626.6 588.6,593.6 590.5,667.4 592.4,707.2 594.3,648.7 596.1,567.2 598.0,574.0 599.9,616.2 601.8,577.0 603.7,590.8 605.6,591.1 607.4,571.2 609.3,577.2 611.2,594.5 613.1,573.9 615.0,554.6 616.9,576.3 618.8,591.6 620.6,592.5 622.5,575.2 624.4,593.9 626.3,589.4 628.2,562.0 630.1,601.3 631.9,597.1 633.8,649.5 635.7,686.5 637.6,719.9 639.5,693.3 641.4,636.4 643.2,610.9 645.1,557.6 647.0,587.1 648.9,595.9 650.8,587.5 652.7,618.8 654.5,598.1 656.4,578.9 658.3,593.0 660.2,559.9 662.1,607.0 664.0,553.8 665.8,560.3 667.7,667.2 669.6,674.0 671.5,621.6 673.4,598.0 675.3,597.6 677.1,597.9 679.0,588.3 680.9,610.1 682.8,579.2 684.7,598.8 686.6,584.0 688.4,593.6 690.3,612.3 692.2,635.8 694.1,595.8 696.0,619.4 697.9,630.2 699.7,639.9 701.6,658.7 703.5,588.1 705.4,546.8 707.3,601.3 709.2,612.5 711.0,599.9 712.9,589.3 714.8,598.3 716.7,631.9 718.6,596.2 720.5,584.5 722.3,588.4 724.2,601.3 726.1,605.3 728.0,593.0 729.9,583.3 731.8,585.3 733.7,551.9 735.5,571.8 737.4,599.2 739.3,592.1 741.2,686.8 743.1,648.9 745.0,591.7 746.8,562.7 748.7,542.7 750.6,565.1 752.5,649.7 754.4,679.1 756.3,712.3 758.1,670.3 760.0,616.4 761.9,617.2 763.8,625.0 765.7,607.3 767.6,626.1 769.4,609.8 771.3,644.0 773.2,647.3 775.1,686.8 777.0,612.7 778.9,586.9 780.7,597.5 782.6,622.8 784.5,648.5 786.4,608.0 788.3,609.6 790.2,577.5 792.0,614.1 793.9,607.9 795.8,598.9 797.7,580.1 799.6,582.6 801.5,571.3 803.3,602.3 805.2,600.0 807.1,634.6 809.0,587.4 810.9,565.5 812.8,572.0 814.6,581.2 816.5,576.1 818.4,579.3 820.3,587.2 822.2,558.8 824.1,583.8 825.9,571.9 827.8,592.1 829.7,575.6 831.6,572.3 833.5,556.6 835.4,578.7 837.2,587.3 839.1,577.5 841.0,627.0 842.9,633.8 844.8,621.3 846.7,598.0 848.6,633.5 850.4,668.1 852.3,635.6 854.2,668.9 856.1,668.9 858.0,618.8 859.9,625.6 861.7,645.6 863.6,573.5 865.5,651.0 867.4,639.1 869.3,638.5 871.2,626.2 873.0,605.2 874.9,616.8 876.8,601.5 878.7,610.7 880.6,621.1 882.5,599.4 884.3,604.6 886.2,584.6 888.1,579.0 890.0,631.8 891.9,601.5 893.8,599.4 895.6,601.7 897.5,585.2 899.4,601.2 901.3,579.2 903.2,648.5 905.1,628.2 906.9,592.5 908.8,615.5 910.7,616.0 912.6,599.5 914.5,582.4 916.4,620.4 918.2,586.0 920.1,611.8 922.0,585.9 923.9,573.5 925.8,624.6 927.7,632.6 929.5,577.7 931.4,624.1 933.3,633.6 935.2,686.8 937.1,650.9 939.0,604.0 940.8,582.2 942.7,590.2 944.6,569.5 946.5,594.0" stroke="#00ffff" stroke-width="1"/><path d="M67 507.5H72 M67 521.5H72 M67 547.5H72 M67 572.5H72 M67 598.5H72 M67 623.5H72 M67 649.5H72 M67 674.5H72 M67 700.5H72 M67 725.5H72 M67 751.5H72 M67 776.5H72 M67 801.5H72 M72.5 801V806 M218.5 801V806 M364.5 801V806 M510.5 801V806 M655.5 801V806 M801.5 801V806 M947.5 801V806" stroke="#000"/></g><g text-anchor="end" letter-spacing=".35"><text x="61.500" y="511.0">345.50</text><text x="61.500" y="525.0">340.00</text><text x="61.500" y="551.0">330.00</text><text x="61.500" y="576.0">320.00</text><text x="61.500" y="602.0">310.00</text><text x="61.500" y="627.0">300.00</text><text x="61.500" y="653.0">290.00</text><text x="61.500" y="678.0">280.00</text><text x="61.500" y="704.0">270.00</text><text x="61.500" y="729.0">260.00</text><text x="61.500" y="755.0">250.00</text><text x="61.500" y="780.0">240.00</text><text x="61.500" y="805.0">230.00</text></g><g text-anchor="middle" letter-spacing=".6"><text x="72.5" y="816">0:00:00</text><text x="218.3" y="816">0:00:20</text><text x="364.2" y="816">0:00:40</text><text x="510.0" y="816">0:01:00</text><text x="655.8" y="816">0:01:20</text><text x="801.7" y="816">0:01:40</text><text x="947.5" y="816">0:02:00</text></g><text x="509" y="835" text-anchor="middle" font-family="Liberation Mono,monospace" font-size="12.500" textLength="153" lengthAdjust="spacing">Elapsed time (h:mm:ss)</text><text transform="translate(23 669.500) rotate(-90)" font-family="Liberation Mono,monospace" font-size="13" textLength="28" lengthAdjust="spacing">Mbps</text></svg>
<div class="a" style="left:992px;top:470px;width:244px;height:374px;background:#fff"></div>
<div class="a" style="left:993px;top:475px;width:244px;text-align:center;font-weight:bold;font-size:12px;line-height:14px;letter-spacing:.85px">Legend</div>
<div class="a" style="left:992px;top:492px;width:244px;height:352px;border-top:1px solid #696969;border-left:1px solid #696969;background:#fff"></div>
<div class="a" style="left:1220px;top:493px;width:16px;height:351px;background:#f0f0f0"></div>
<div class="a" style="left:993px;top:828px;width:243px;height:16px;background:#f0f0f0"></div>
<svg class="a" style="left:1222px;top:497px" width="12" height="10" viewBox="0 0 12 10"><path d="M2.500 7.500l3.500-3.500l3.500 3.500" stroke="#bcbcbc" stroke-width="2" fill="none"/></svg>
<svg class="a" style="left:1222px;top:814px" width="12" height="10" viewBox="0 0 12 10"><path d="M2.500 2.500l3.500 3.500l3.500-3.500" stroke="#bcbcbc" stroke-width="2" fill="none"/></svg>
<svg class="a" style="left:996px;top:830px" width="10" height="12" viewBox="0 0 10 12"><path d="M7 2.500l-3.500 3.500l3.500 3.500" stroke="#bcbcbc" stroke-width="2" fill="none"/></svg>
<svg class="a" style="left:1206px;top:830px" width="10" height="12" viewBox="0 0 10 12"><path d="M3 2.500l3.500 3.500l-3.500 3.500" stroke="#bcbcbc" stroke-width="2" fill="none"/></svg>
<div class="a" style="left:1000px;top:498px;width:19px;height:1px;background:#ff0000"></div><div class="a m" style="left:1023px;top:493px;color:#ff0000">Pair 1</div>
<div class="a" style="left:1000px;top:509px;width:19px;height:1px;background:#00ff00"></div><div class="a m" style="left:1023px;top:504px;color:#00ff00">Pair 2</div>
<div class="a" style="left:1000px;top:520px;width:19px;height:1px;background:#ff00ff"></div><div class="a m" style="left:1023px;top:515px;color:#ff00ff">Pair 3</div>
<div class="a" style="left:1000px;top:531px;width:19px;height:1px;background:#00ffff"></div><div class="a m" style="left:1023px;top:526px;color:#00ffff">Pair 4</div>
<div class="a" style="left:1px;top:844px;width:1240px;height:4px;background:linear-gradient(#f6f6f6 2px,#9c9c9c 2px,#9c9c9c 3px,#666 3px)"></div>
<div class="a" style="left:1236px;top:155px;width:1px;height:689px;background:#696969"></div>
<div class="a" style="left:1237px;top:155px;width:3px;height:689px;background:#fafafa"></div>
<div class="a" style="left:1240px;top:155px;width:1px;height:716px;background:#5a5a5a"></div>
<div class="a" style="left:1px;top:848px;width:1240px;height:23px;background:#f0f0f0"></div>
<div class="st" style="left:9px;letter-spacing:0.15px">Pairs: 4</div>
<div class="st" style="left:92px;letter-spacing:0.34px">Start: 2019/6/5, 17:39:09</div>
<div class="st" style="left:355px;letter-spacing:0.55px">Ixia Configuratio</div>
<div class="st" style="left:468px;letter-spacing:0.32px">End: 2019/6/5, 17:41:09</div>
<div class="st" style="left:617px;letter-spacing:0.27px">Run time: 00:02:00</div>
<div class="st" style="left:736px;letter-spacing:0.63px">Ran to completion</div>
<div class="ss" style="left:84px"></div>
<div class="ss" style="left:347px"></div>
<div class="ss" style="left:460px"></div>
<div class="ss" style="left:609px"></div>
<div class="ss" style="left:728px"></div>
<div class="ss" style="left:848px"></div>
<div class="a" style="left:0;top:0;width:1242px;height:1px;background:#111"></div>
<div class="a" style="left:0;top:0;width:1px;height:872px;background:#111"></div>
<div class="a" style="left:1241px;top:0;width:1px;height:872px;background:#111"></div>
<div class="a" style="left:0;top:871px;width:1242px;height:1px;background:#111"></div>
</body></html>
